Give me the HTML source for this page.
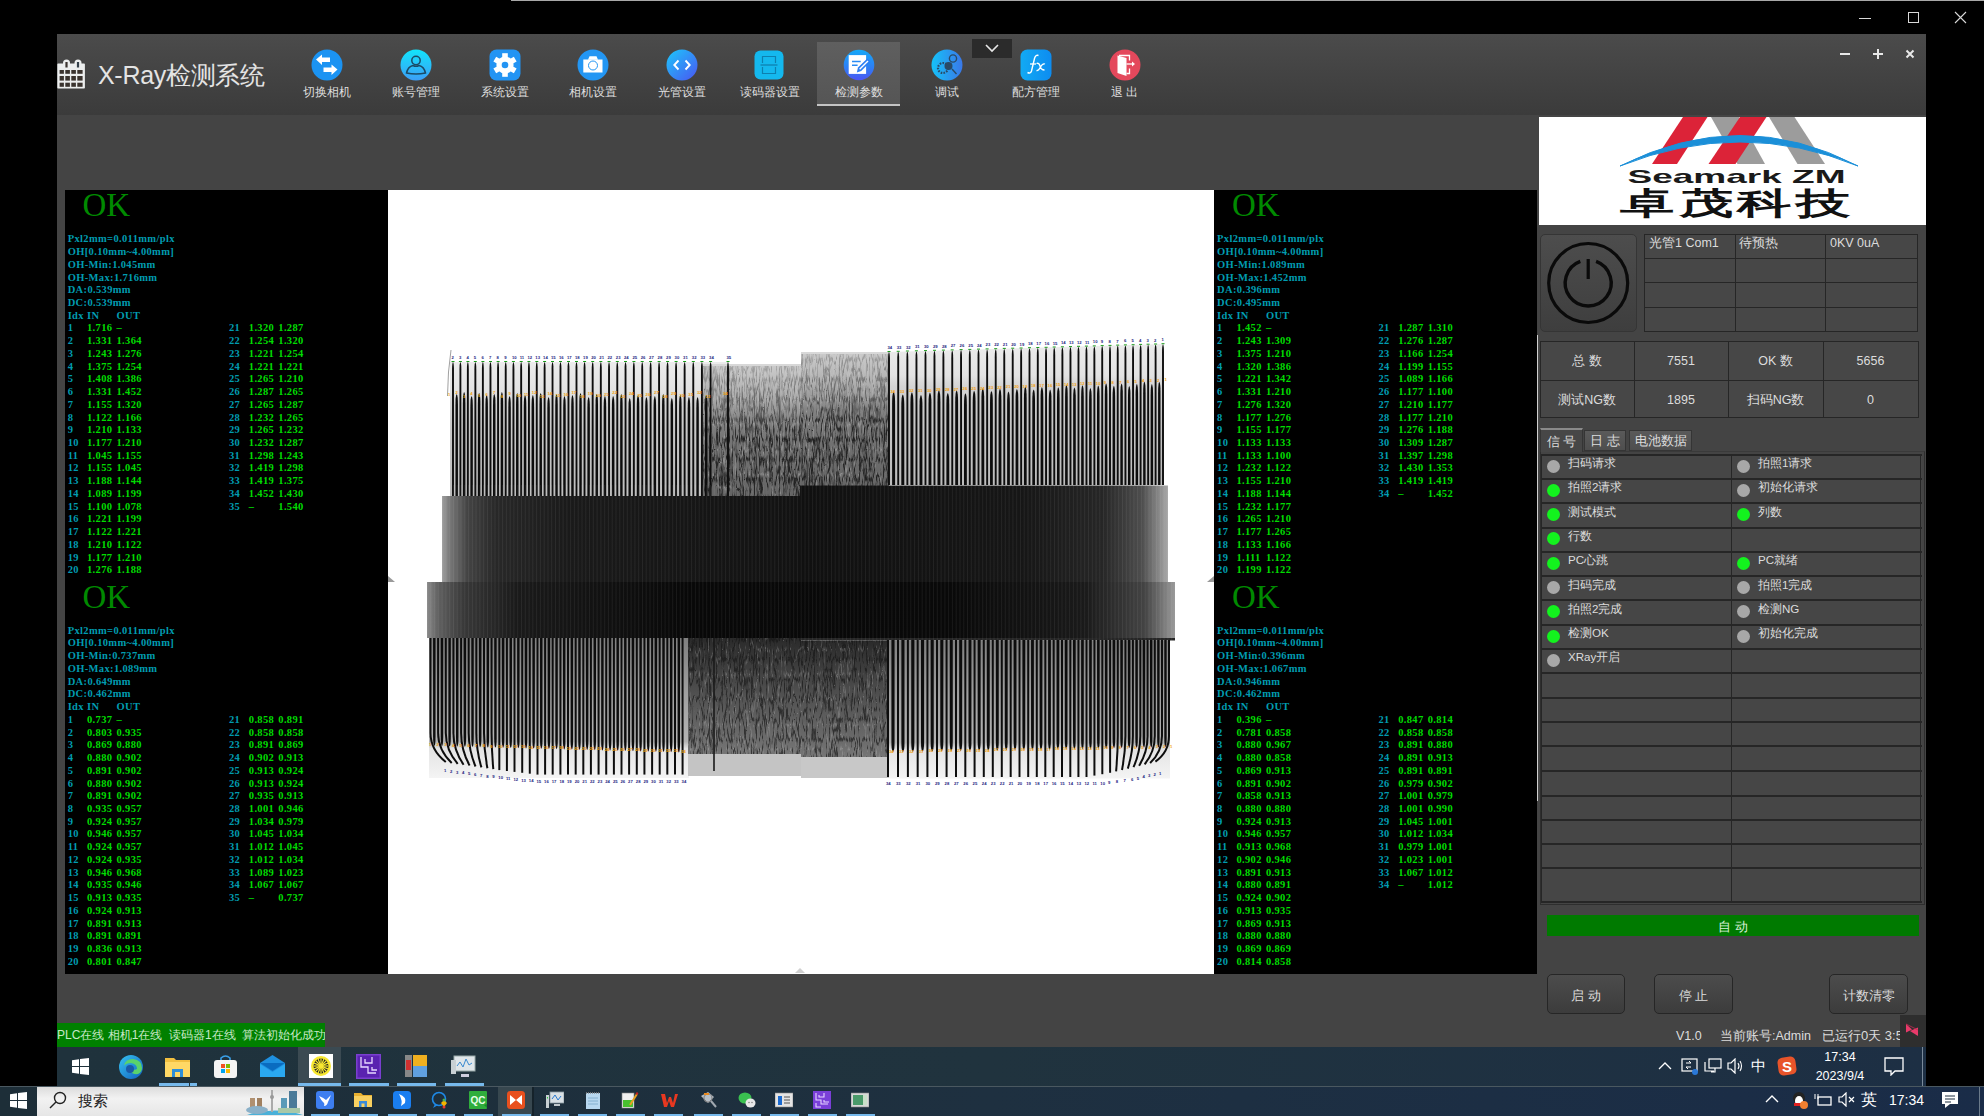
<!DOCTYPE html>
<html><head><meta charset="utf-8"><title>X-Ray</title>
<style>
*{margin:0;padding:0;box-sizing:border-box}
html,body{width:1984px;height:1116px;overflow:hidden;background:#000;font-family:"Liberation Sans",sans-serif}
.a{position:absolute}
.hd{position:absolute;left:57px;top:34px;width:1869px;height:81px;background:linear-gradient(#4b4b4b,#3b3b3b)}
.nav{position:absolute;top:0;width:84px;height:81px;text-align:center;color:#dcdcdc;font-size:12px}
.nav .ic{position:absolute;left:26px;top:15px;width:32px;height:32px}
.nav .lb{position:absolute;left:0;width:84px;top:51px;line-height:14px;white-space:nowrap}
.pn{position:absolute;background:#000;overflow:hidden}
.ok{position:absolute;font-family:"Liberation Serif",serif;color:#008a00;font-size:33px;line-height:33px}
.tx{position:absolute;font-family:"Liberation Serif",serif;font-weight:bold;font-size:10.5px;line-height:10px;white-space:nowrap;letter-spacing:0.35px}
.c{color:#009cb0}.g{color:#00dc00}
.grid td{border:1px solid #262626}
.sig{position:absolute;color:#dcdcdc;font-size:11.6px;white-space:nowrap}
.led{position:absolute;width:13px;height:13px;border-radius:50%}
.on{background:#13f21e}.off{background:#a8a8a8}
.btn{position:absolute;border:1px solid #262626;border-radius:5px;background:linear-gradient(#4c4c4c,#3c3c3c);color:#dcdcdc;font-size:13px;text-align:center}
.st{position:absolute;color:#dcdcdc;font-size:12.5px;white-space:nowrap}
</style></head><body>

<div class="a" style="left:511px;top:0;width:1473px;height:1px;background:#a8a8a8"></div>
<div class="a" style="left:1859px;top:18px;width:12px;height:1px;background:#d8d8d8"></div>
<div class="a" style="left:1908px;top:12px;width:11px;height:11px;border:1px solid #d8d8d8"></div>
<svg class="a" style="left:1954px;top:11px" width="13" height="13"><path d="M1 1L12 12M12 1L1 12" stroke="#d8d8d8" stroke-width="1.1"/></svg>
<div class="a" style="left:57px;top:34px;width:1869px;height:1013px;background:#444"></div>
<div class="hd"></div>
<svg class="a" style="left:57px;top:59px" width="29" height="30" viewBox="0 0 29 30"><rect x="0.3" y="4.6" width="27.6" height="25" rx="0.8" fill="#eceeee"/><rect x="6" y="0.6" width="7" height="8" rx="3.5" fill="#eceeee"/><rect x="8.4" y="3" width="2.2" height="5.5" fill="#3a3430"/><rect x="17.5" y="0.6" width="7" height="8" rx="3.5" fill="#eceeee"/><rect x="19.9" y="3" width="2.2" height="5.5" fill="#34404a"/><rect x="2.6" y="11.0" width="4.3" height="3.8" fill="#3a332e"/><rect x="2.6" y="17.0" width="4.3" height="4.6" fill="#3a332e"/><rect x="2.6" y="23.7" width="4.3" height="4.1" fill="#3a332e"/><rect x="8.3" y="11.0" width="4.6" height="3.8" fill="#3a332e"/><rect x="8.3" y="17.0" width="4.6" height="4.6" fill="#3a332e"/><rect x="8.3" y="23.7" width="4.6" height="4.1" fill="#3a332e"/><rect x="14.3" y="11.0" width="4.6" height="3.8" fill="#3a332e"/><rect x="14.3" y="17.0" width="4.6" height="4.6" fill="#3a332e"/><rect x="14.3" y="23.7" width="4.6" height="4.1" fill="#3a332e"/><rect x="20.3" y="11.0" width="5.3" height="3.8" fill="#3a332e"/><rect x="20.3" y="17.0" width="5.3" height="4.6" fill="#3a332e"/><rect x="20.3" y="23.7" width="5.3" height="4.1" fill="#3a332e"/></svg>
<div class="a" style="left:98px;top:58px;font-size:25px;line-height:34px;color:#e4e4e4;white-space:nowrap;letter-spacing:-0.3px">X-Ray检测系统</div>
<div class="a" style="left:817px;top:42px;width:83px;height:64px;background:linear-gradient(#5f5f5f,#555)"></div>
<div class="a" style="left:817px;top:104px;width:83px;height:2px;background:#c4c4c4"></div>
<div class="a" style="left:972px;top:39px;width:40px;height:19px;background:#2b2b2b"></div>
<svg class="a" style="left:984px;top:43px" width="16" height="10"><path d="M2 2L8 8L14 2" stroke="#e8e8e8" stroke-width="1.6" fill="none"/></svg>
<div class="a" style="left:311.3px;top:49px;width:32px;height:32px"><svg width="32" height="32" viewBox="0 0 32 32"><circle cx="16" cy="16" r="15.5" fill="#1b93f2"/><path d="M5 10.5L11 5.5V8.5H19V13H11V16Z" fill="#fff"/><path d="M26.5 20.5L20.5 15.5V18.5H12.5V23H20.5V26Z" fill="#fff"/></svg></div>
<div class="a" style="left:277.3px;top:84px;width:100px;text-align:center;font-size:12px;line-height:16px;color:#dedede;white-space:nowrap">切换相机</div>
<div class="a" style="left:399.9px;top:49px;width:32px;height:32px"><svg width="32" height="32" viewBox="0 0 32 32"><defs><linearGradient id="ga" x1="0" y1="0" x2="0" y2="1"><stop offset="0" stop-color="#12e4fb"/><stop offset="1" stop-color="#3c9ef7"/></linearGradient></defs><circle cx="16" cy="16" r="15.5" fill="url(#ga)"/><circle cx="16" cy="11.5" r="4.2" fill="none" stroke="#1b4a66" stroke-width="1.5"/><path d="M6.5 24Q8 17.5 13 16.5Q16 18 19 16.5Q24 17.5 25.5 24Q16 26 6.5 24Z" fill="none" stroke="#1b4a66" stroke-width="1.5"/></svg></div>
<div class="a" style="left:365.9px;top:84px;width:100px;text-align:center;font-size:12px;line-height:16px;color:#dedede;white-space:nowrap">账号管理</div>
<div class="a" style="left:488.5px;top:49px;width:32px;height:32px"><svg width="32" height="32" viewBox="0 0 32 32"><rect x="0.5" y="0.5" width="31" height="31" rx="7" fill="#2394f3"/><rect x="13.2" y="4.2" width="5.6" height="6" fill="#fff" transform="rotate(0 16 16)"/><rect x="13.2" y="4.2" width="5.6" height="6" fill="#fff" transform="rotate(60 16 16)"/><rect x="13.2" y="4.2" width="5.6" height="6" fill="#fff" transform="rotate(120 16 16)"/><rect x="13.2" y="4.2" width="5.6" height="6" fill="#fff" transform="rotate(180 16 16)"/><rect x="13.2" y="4.2" width="5.6" height="6" fill="#fff" transform="rotate(240 16 16)"/><rect x="13.2" y="4.2" width="5.6" height="6" fill="#fff" transform="rotate(300 16 16)"/><circle cx="16" cy="16" r="8.6" fill="#fff"/><circle cx="16" cy="16" r="3.3" fill="#2394f3"/></svg></div>
<div class="a" style="left:454.5px;top:84px;width:100px;text-align:center;font-size:12px;line-height:16px;color:#dedede;white-space:nowrap">系统设置</div>
<div class="a" style="left:577.0px;top:49px;width:32px;height:32px"><svg width="32" height="32" viewBox="0 0 32 32"><circle cx="16" cy="16" r="15.5" fill="#2396f3"/><rect x="6.3" y="10.5" width="19.2" height="13" fill="#fff"/><path d="M11 10.8L12.5 7.2H19.5L21 10.8Z" fill="#fff"/><circle cx="16" cy="16.5" r="4.5" fill="none" stroke="#2396f3" stroke-width="1"/></svg></div>
<div class="a" style="left:543.0px;top:84px;width:100px;text-align:center;font-size:12px;line-height:16px;color:#dedede;white-space:nowrap">相机设置</div>
<div class="a" style="left:665.6px;top:49px;width:32px;height:32px"><svg width="32" height="32" viewBox="0 0 32 32"><defs><linearGradient id="gt" x1="0" y1="0" x2="1" y2="1"><stop offset="0" stop-color="#1cc8fb"/><stop offset="1" stop-color="#4a55f2"/></linearGradient></defs><circle cx="16" cy="16" r="15.5" fill="url(#gt)"/><path d="M12.5 11.5L8.3 16L12.5 20.5M19.5 11.5L23.7 16L19.5 20.5" stroke="#fff" stroke-width="1.9" fill="none"/></svg></div>
<div class="a" style="left:631.6px;top:84px;width:100px;text-align:center;font-size:12px;line-height:16px;color:#dedede;white-space:nowrap">光管设置</div>
<div class="a" style="left:754.2px;top:49px;width:32px;height:32px"><svg width="32" height="32" viewBox="0 0 32 32"><rect x="0.5" y="1.5" width="29" height="29" rx="6" fill="#14b8ee"/><path d="M8.5 14V7.5H21.5V14M8.5 18V24.5H21.5V18" stroke="#0d80b0" stroke-width="1.2" fill="none"/><path d="M6.5 16H23.5" stroke="#0d80b0" stroke-width="1.3"/></svg></div>
<div class="a" style="left:720.2px;top:84px;width:100px;text-align:center;font-size:12px;line-height:16px;color:#dedede;white-space:nowrap">读码器设置</div>
<div class="a" style="left:842.8px;top:49px;width:32px;height:32px"><svg width="32" height="32" viewBox="0 0 32 32"><defs><linearGradient id="gd" x1="0" y1="0" x2="0" y2="1"><stop offset="0" stop-color="#15a8f8"/><stop offset="0.6" stop-color="#2f7df4"/><stop offset="1" stop-color="#4c55f3"/></linearGradient></defs><circle cx="16" cy="16" r="15.3" fill="url(#gd)"/><rect x="5.7" y="6.1" width="17.4" height="18.8" fill="#fff"/><path d="M9 12.6H17.7M9 16.3H14.6" stroke="#2a8cf4" stroke-width="1.5"/><path d="M13.8 23.6L15 18.6L24.3 9.6L27.4 12.8L18.2 21.9Z" fill="#2b7ef4"/><path d="M16.6 20.3L25 12" stroke="#fff" stroke-width="1.4"/></svg></div>
<div class="a" style="left:808.8px;top:84px;width:100px;text-align:center;font-size:12px;line-height:16px;color:#dedede;white-space:nowrap">检测参数</div>
<div class="a" style="left:931.4px;top:49px;width:32px;height:32px"><svg width="32" height="32" viewBox="0 0 32 32"><defs><linearGradient id="gg" x1="0" y1="0" x2="1" y2="0"><stop offset="0" stop-color="#15c2f8"/><stop offset="1" stop-color="#3a78e8"/></linearGradient></defs><circle cx="16" cy="16" r="15.5" fill="url(#gg)"/><circle cx="12" cy="19" r="5" fill="none" stroke="#2a4a66" stroke-width="2.2" stroke-dasharray="1.6 1.2"/><circle cx="17.5" cy="17" r="4" fill="#2a4a66"/><circle cx="22" cy="9.5" r="3.6" fill="none" stroke="#2a4a66" stroke-width="1.4"/><path d="M21 20L25.5 25" stroke="#2a4a66" stroke-width="1.4"/></svg></div>
<div class="a" style="left:897.4px;top:84px;width:100px;text-align:center;font-size:12px;line-height:16px;color:#dedede;white-space:nowrap">调试</div>
<div class="a" style="left:1019.9px;top:49px;width:32px;height:32px"><svg width="32" height="32" viewBox="0 0 32 32"><defs><linearGradient id="gf" x1="0" y1="0" x2="1" y2="0"><stop offset="0" stop-color="#12aaf4"/><stop offset="1" stop-color="#0d8cf0"/></linearGradient></defs><rect x="0.5" y="0.5" width="31" height="31" rx="7" fill="url(#gf)"/><path d="M18.5 6.5Q15.5 5.5 14.5 9.5L11.5 22Q10.5 25 7.5 23.5" stroke="#fff" stroke-width="1.4" fill="none"/><path d="M10 15H16" stroke="#fff" stroke-width="1.3"/><path d="M16.5 14.5Q19 13.5 20 17Q21 21 24.5 21M25 15Q22.5 14 20.5 18Q18.5 22 16.5 21.5" stroke="#fff" stroke-width="1.3" fill="none"/></svg></div>
<div class="a" style="left:985.9px;top:84px;width:100px;text-align:center;font-size:12px;line-height:16px;color:#dedede;white-space:nowrap">配方管理</div>
<div class="a" style="left:1108.5px;top:49px;width:32px;height:32px"><svg width="32" height="32" viewBox="0 0 32 32"><circle cx="16" cy="16" r="15.5" fill="#e4485c"/><path d="M8.5 6.5L17.5 9V27L8.5 24Z" fill="#fff"/><path d="M10 6.5H20.5V11.5M20.5 19.5V24.5H17.5" stroke="#fff" stroke-width="1.3" fill="none"/><path d="M17.5 15H24" stroke="#fff" stroke-width="1.3"/><path d="M23 12.5L26 15L23 17.5Z" fill="#fff"/></svg></div>
<div class="a" style="left:1074.5px;top:84px;width:100px;text-align:center;font-size:12px;line-height:16px;color:#dedede;white-space:nowrap">退 出</div>
<svg class="a" style="left:1838px;top:47px" width="80" height="14"><path d="M2 7H12" stroke="#e8e8e8" stroke-width="2"/><path d="M35 7H45M40 2V12" stroke="#e8e8e8" stroke-width="2"/><path d="M68.5 3.5L75.5 10.5M75.5 3.5L68.5 10.5" stroke="#e8e8e8" stroke-width="2"/></svg>
<div class="pn" style="left:65px;top:190px;width:323px;height:784px"></div>
<div class="a" style="left:388px;top:190px;width:826px;height:784px;background:#fff"></div>
<div class="pn" style="left:1214px;top:190px;width:323px;height:784px"></div>
<div class="ok" style="left:82.5px;top:189.3px">OK</div>
<div class="tx c" style="left:67.7px;top:234.3px">Pxl2mm=0.011mm/plx</div>
<div class="tx c" style="left:67.7px;top:247.0px">OH[0.10mm~4.00mm]</div>
<div class="tx c" style="left:67.7px;top:259.8px">OH-Min:1.045mm</div>
<div class="tx c" style="left:67.7px;top:272.5px">OH-Max:1.716mm</div>
<div class="tx c" style="left:67.7px;top:285.2px">DA:0.539mm</div>
<div class="tx c" style="left:67.7px;top:298.0px">DC:0.539mm</div>
<div class="tx c" style="left:67.7px;top:310.7px">Idx</div>
<div class="tx c" style="left:87.0px;top:310.7px">IN</div>
<div class="tx c" style="left:116.5px;top:310.7px">OUT</div>
<div class="tx c" style="left:67.7px;top:323.4px">1</div>
<div class="tx g" style="left:87.0px;top:323.4px">1.716</div>
<div class="tx g" style="left:116.5px;top:323.4px">&ndash;</div>
<div class="tx c" style="left:67.7px;top:336.1px">2</div>
<div class="tx g" style="left:87.0px;top:336.1px">1.331</div>
<div class="tx g" style="left:116.5px;top:336.1px">1.364</div>
<div class="tx c" style="left:67.7px;top:348.9px">3</div>
<div class="tx g" style="left:87.0px;top:348.9px">1.243</div>
<div class="tx g" style="left:116.5px;top:348.9px">1.276</div>
<div class="tx c" style="left:67.7px;top:361.6px">4</div>
<div class="tx g" style="left:87.0px;top:361.6px">1.375</div>
<div class="tx g" style="left:116.5px;top:361.6px">1.254</div>
<div class="tx c" style="left:67.7px;top:374.3px">5</div>
<div class="tx g" style="left:87.0px;top:374.3px">1.408</div>
<div class="tx g" style="left:116.5px;top:374.3px">1.386</div>
<div class="tx c" style="left:67.7px;top:387.1px">6</div>
<div class="tx g" style="left:87.0px;top:387.1px">1.331</div>
<div class="tx g" style="left:116.5px;top:387.1px">1.452</div>
<div class="tx c" style="left:67.7px;top:399.8px">7</div>
<div class="tx g" style="left:87.0px;top:399.8px">1.155</div>
<div class="tx g" style="left:116.5px;top:399.8px">1.320</div>
<div class="tx c" style="left:67.7px;top:412.5px">8</div>
<div class="tx g" style="left:87.0px;top:412.5px">1.122</div>
<div class="tx g" style="left:116.5px;top:412.5px">1.166</div>
<div class="tx c" style="left:67.7px;top:425.2px">9</div>
<div class="tx g" style="left:87.0px;top:425.2px">1.210</div>
<div class="tx g" style="left:116.5px;top:425.2px">1.133</div>
<div class="tx c" style="left:67.7px;top:438.0px">10</div>
<div class="tx g" style="left:87.0px;top:438.0px">1.177</div>
<div class="tx g" style="left:116.5px;top:438.0px">1.210</div>
<div class="tx c" style="left:67.7px;top:450.7px">11</div>
<div class="tx g" style="left:87.0px;top:450.7px">1.045</div>
<div class="tx g" style="left:116.5px;top:450.7px">1.155</div>
<div class="tx c" style="left:67.7px;top:463.4px">12</div>
<div class="tx g" style="left:87.0px;top:463.4px">1.155</div>
<div class="tx g" style="left:116.5px;top:463.4px">1.045</div>
<div class="tx c" style="left:67.7px;top:476.2px">13</div>
<div class="tx g" style="left:87.0px;top:476.2px">1.188</div>
<div class="tx g" style="left:116.5px;top:476.2px">1.144</div>
<div class="tx c" style="left:67.7px;top:488.9px">14</div>
<div class="tx g" style="left:87.0px;top:488.9px">1.089</div>
<div class="tx g" style="left:116.5px;top:488.9px">1.199</div>
<div class="tx c" style="left:67.7px;top:501.6px">15</div>
<div class="tx g" style="left:87.0px;top:501.6px">1.100</div>
<div class="tx g" style="left:116.5px;top:501.6px">1.078</div>
<div class="tx c" style="left:67.7px;top:514.4px">16</div>
<div class="tx g" style="left:87.0px;top:514.4px">1.221</div>
<div class="tx g" style="left:116.5px;top:514.4px">1.199</div>
<div class="tx c" style="left:67.7px;top:527.1px">17</div>
<div class="tx g" style="left:87.0px;top:527.1px">1.122</div>
<div class="tx g" style="left:116.5px;top:527.1px">1.221</div>
<div class="tx c" style="left:67.7px;top:539.8px">18</div>
<div class="tx g" style="left:87.0px;top:539.8px">1.210</div>
<div class="tx g" style="left:116.5px;top:539.8px">1.122</div>
<div class="tx c" style="left:67.7px;top:552.5px">19</div>
<div class="tx g" style="left:87.0px;top:552.5px">1.177</div>
<div class="tx g" style="left:116.5px;top:552.5px">1.210</div>
<div class="tx c" style="left:67.7px;top:565.3px">20</div>
<div class="tx g" style="left:87.0px;top:565.3px">1.276</div>
<div class="tx g" style="left:116.5px;top:565.3px">1.188</div>
<div class="tx c" style="left:229.0px;top:323.4px">21</div>
<div class="tx g" style="left:248.8px;top:323.4px">1.320</div>
<div class="tx g" style="left:278.3px;top:323.4px">1.287</div>
<div class="tx c" style="left:229.0px;top:336.1px">22</div>
<div class="tx g" style="left:248.8px;top:336.1px">1.254</div>
<div class="tx g" style="left:278.3px;top:336.1px">1.320</div>
<div class="tx c" style="left:229.0px;top:348.9px">23</div>
<div class="tx g" style="left:248.8px;top:348.9px">1.221</div>
<div class="tx g" style="left:278.3px;top:348.9px">1.254</div>
<div class="tx c" style="left:229.0px;top:361.6px">24</div>
<div class="tx g" style="left:248.8px;top:361.6px">1.221</div>
<div class="tx g" style="left:278.3px;top:361.6px">1.221</div>
<div class="tx c" style="left:229.0px;top:374.3px">25</div>
<div class="tx g" style="left:248.8px;top:374.3px">1.265</div>
<div class="tx g" style="left:278.3px;top:374.3px">1.210</div>
<div class="tx c" style="left:229.0px;top:387.1px">26</div>
<div class="tx g" style="left:248.8px;top:387.1px">1.287</div>
<div class="tx g" style="left:278.3px;top:387.1px">1.265</div>
<div class="tx c" style="left:229.0px;top:399.8px">27</div>
<div class="tx g" style="left:248.8px;top:399.8px">1.265</div>
<div class="tx g" style="left:278.3px;top:399.8px">1.287</div>
<div class="tx c" style="left:229.0px;top:412.5px">28</div>
<div class="tx g" style="left:248.8px;top:412.5px">1.232</div>
<div class="tx g" style="left:278.3px;top:412.5px">1.265</div>
<div class="tx c" style="left:229.0px;top:425.2px">29</div>
<div class="tx g" style="left:248.8px;top:425.2px">1.265</div>
<div class="tx g" style="left:278.3px;top:425.2px">1.232</div>
<div class="tx c" style="left:229.0px;top:438.0px">30</div>
<div class="tx g" style="left:248.8px;top:438.0px">1.232</div>
<div class="tx g" style="left:278.3px;top:438.0px">1.287</div>
<div class="tx c" style="left:229.0px;top:450.7px">31</div>
<div class="tx g" style="left:248.8px;top:450.7px">1.298</div>
<div class="tx g" style="left:278.3px;top:450.7px">1.243</div>
<div class="tx c" style="left:229.0px;top:463.4px">32</div>
<div class="tx g" style="left:248.8px;top:463.4px">1.419</div>
<div class="tx g" style="left:278.3px;top:463.4px">1.298</div>
<div class="tx c" style="left:229.0px;top:476.2px">33</div>
<div class="tx g" style="left:248.8px;top:476.2px">1.419</div>
<div class="tx g" style="left:278.3px;top:476.2px">1.375</div>
<div class="tx c" style="left:229.0px;top:488.9px">34</div>
<div class="tx g" style="left:248.8px;top:488.9px">1.452</div>
<div class="tx g" style="left:278.3px;top:488.9px">1.430</div>
<div class="tx c" style="left:229.0px;top:501.6px">35</div>
<div class="tx g" style="left:248.8px;top:501.6px">&ndash;</div>
<div class="tx g" style="left:278.3px;top:501.6px">1.540</div>
<div class="ok" style="left:82.5px;top:580.7px">OK</div>
<div class="tx c" style="left:67.7px;top:625.7px">Pxl2mm=0.011mm/plx</div>
<div class="tx c" style="left:67.7px;top:638.4px">OH[0.10mm~4.00mm]</div>
<div class="tx c" style="left:67.7px;top:651.2px">OH-Min:0.737mm</div>
<div class="tx c" style="left:67.7px;top:663.9px">OH-Max:1.089mm</div>
<div class="tx c" style="left:67.7px;top:676.6px">DA:0.649mm</div>
<div class="tx c" style="left:67.7px;top:689.4px">DC:0.462mm</div>
<div class="tx c" style="left:67.7px;top:702.1px">Idx</div>
<div class="tx c" style="left:87.0px;top:702.1px">IN</div>
<div class="tx c" style="left:116.5px;top:702.1px">OUT</div>
<div class="tx c" style="left:67.7px;top:714.8px">1</div>
<div class="tx g" style="left:87.0px;top:714.8px">0.737</div>
<div class="tx g" style="left:116.5px;top:714.8px">&ndash;</div>
<div class="tx c" style="left:67.7px;top:727.5px">2</div>
<div class="tx g" style="left:87.0px;top:727.5px">0.803</div>
<div class="tx g" style="left:116.5px;top:727.5px">0.935</div>
<div class="tx c" style="left:67.7px;top:740.3px">3</div>
<div class="tx g" style="left:87.0px;top:740.3px">0.869</div>
<div class="tx g" style="left:116.5px;top:740.3px">0.880</div>
<div class="tx c" style="left:67.7px;top:753.0px">4</div>
<div class="tx g" style="left:87.0px;top:753.0px">0.880</div>
<div class="tx g" style="left:116.5px;top:753.0px">0.902</div>
<div class="tx c" style="left:67.7px;top:765.7px">5</div>
<div class="tx g" style="left:87.0px;top:765.7px">0.891</div>
<div class="tx g" style="left:116.5px;top:765.7px">0.902</div>
<div class="tx c" style="left:67.7px;top:778.5px">6</div>
<div class="tx g" style="left:87.0px;top:778.5px">0.880</div>
<div class="tx g" style="left:116.5px;top:778.5px">0.902</div>
<div class="tx c" style="left:67.7px;top:791.2px">7</div>
<div class="tx g" style="left:87.0px;top:791.2px">0.891</div>
<div class="tx g" style="left:116.5px;top:791.2px">0.902</div>
<div class="tx c" style="left:67.7px;top:803.9px">8</div>
<div class="tx g" style="left:87.0px;top:803.9px">0.935</div>
<div class="tx g" style="left:116.5px;top:803.9px">0.957</div>
<div class="tx c" style="left:67.7px;top:816.7px">9</div>
<div class="tx g" style="left:87.0px;top:816.7px">0.924</div>
<div class="tx g" style="left:116.5px;top:816.7px">0.957</div>
<div class="tx c" style="left:67.7px;top:829.4px">10</div>
<div class="tx g" style="left:87.0px;top:829.4px">0.946</div>
<div class="tx g" style="left:116.5px;top:829.4px">0.957</div>
<div class="tx c" style="left:67.7px;top:842.1px">11</div>
<div class="tx g" style="left:87.0px;top:842.1px">0.924</div>
<div class="tx g" style="left:116.5px;top:842.1px">0.957</div>
<div class="tx c" style="left:67.7px;top:854.8px">12</div>
<div class="tx g" style="left:87.0px;top:854.8px">0.924</div>
<div class="tx g" style="left:116.5px;top:854.8px">0.935</div>
<div class="tx c" style="left:67.7px;top:867.6px">13</div>
<div class="tx g" style="left:87.0px;top:867.6px">0.946</div>
<div class="tx g" style="left:116.5px;top:867.6px">0.968</div>
<div class="tx c" style="left:67.7px;top:880.3px">14</div>
<div class="tx g" style="left:87.0px;top:880.3px">0.935</div>
<div class="tx g" style="left:116.5px;top:880.3px">0.946</div>
<div class="tx c" style="left:67.7px;top:893.0px">15</div>
<div class="tx g" style="left:87.0px;top:893.0px">0.913</div>
<div class="tx g" style="left:116.5px;top:893.0px">0.935</div>
<div class="tx c" style="left:67.7px;top:905.8px">16</div>
<div class="tx g" style="left:87.0px;top:905.8px">0.924</div>
<div class="tx g" style="left:116.5px;top:905.8px">0.913</div>
<div class="tx c" style="left:67.7px;top:918.5px">17</div>
<div class="tx g" style="left:87.0px;top:918.5px">0.891</div>
<div class="tx g" style="left:116.5px;top:918.5px">0.913</div>
<div class="tx c" style="left:67.7px;top:931.2px">18</div>
<div class="tx g" style="left:87.0px;top:931.2px">0.891</div>
<div class="tx g" style="left:116.5px;top:931.2px">0.891</div>
<div class="tx c" style="left:67.7px;top:944.0px">19</div>
<div class="tx g" style="left:87.0px;top:944.0px">0.836</div>
<div class="tx g" style="left:116.5px;top:944.0px">0.913</div>
<div class="tx c" style="left:67.7px;top:956.7px">20</div>
<div class="tx g" style="left:87.0px;top:956.7px">0.801</div>
<div class="tx g" style="left:116.5px;top:956.7px">0.847</div>
<div class="tx c" style="left:229.0px;top:714.8px">21</div>
<div class="tx g" style="left:248.8px;top:714.8px">0.858</div>
<div class="tx g" style="left:278.3px;top:714.8px">0.891</div>
<div class="tx c" style="left:229.0px;top:727.5px">22</div>
<div class="tx g" style="left:248.8px;top:727.5px">0.858</div>
<div class="tx g" style="left:278.3px;top:727.5px">0.858</div>
<div class="tx c" style="left:229.0px;top:740.3px">23</div>
<div class="tx g" style="left:248.8px;top:740.3px">0.891</div>
<div class="tx g" style="left:278.3px;top:740.3px">0.869</div>
<div class="tx c" style="left:229.0px;top:753.0px">24</div>
<div class="tx g" style="left:248.8px;top:753.0px">0.902</div>
<div class="tx g" style="left:278.3px;top:753.0px">0.913</div>
<div class="tx c" style="left:229.0px;top:765.7px">25</div>
<div class="tx g" style="left:248.8px;top:765.7px">0.913</div>
<div class="tx g" style="left:278.3px;top:765.7px">0.924</div>
<div class="tx c" style="left:229.0px;top:778.5px">26</div>
<div class="tx g" style="left:248.8px;top:778.5px">0.913</div>
<div class="tx g" style="left:278.3px;top:778.5px">0.924</div>
<div class="tx c" style="left:229.0px;top:791.2px">27</div>
<div class="tx g" style="left:248.8px;top:791.2px">0.935</div>
<div class="tx g" style="left:278.3px;top:791.2px">0.913</div>
<div class="tx c" style="left:229.0px;top:803.9px">28</div>
<div class="tx g" style="left:248.8px;top:803.9px">1.001</div>
<div class="tx g" style="left:278.3px;top:803.9px">0.946</div>
<div class="tx c" style="left:229.0px;top:816.7px">29</div>
<div class="tx g" style="left:248.8px;top:816.7px">1.034</div>
<div class="tx g" style="left:278.3px;top:816.7px">0.979</div>
<div class="tx c" style="left:229.0px;top:829.4px">30</div>
<div class="tx g" style="left:248.8px;top:829.4px">1.045</div>
<div class="tx g" style="left:278.3px;top:829.4px">1.034</div>
<div class="tx c" style="left:229.0px;top:842.1px">31</div>
<div class="tx g" style="left:248.8px;top:842.1px">1.012</div>
<div class="tx g" style="left:278.3px;top:842.1px">1.045</div>
<div class="tx c" style="left:229.0px;top:854.8px">32</div>
<div class="tx g" style="left:248.8px;top:854.8px">1.012</div>
<div class="tx g" style="left:278.3px;top:854.8px">1.034</div>
<div class="tx c" style="left:229.0px;top:867.6px">33</div>
<div class="tx g" style="left:248.8px;top:867.6px">1.089</div>
<div class="tx g" style="left:278.3px;top:867.6px">1.023</div>
<div class="tx c" style="left:229.0px;top:880.3px">34</div>
<div class="tx g" style="left:248.8px;top:880.3px">1.067</div>
<div class="tx g" style="left:278.3px;top:880.3px">1.067</div>
<div class="tx c" style="left:229.0px;top:893.0px">35</div>
<div class="tx g" style="left:248.8px;top:893.0px">&ndash;</div>
<div class="tx g" style="left:278.3px;top:893.0px">0.737</div>
<div class="ok" style="left:1231.9px;top:189.3px">OK</div>
<div class="tx c" style="left:1217.1px;top:234.3px">Pxl2mm=0.011mm/plx</div>
<div class="tx c" style="left:1217.1px;top:247.0px">OH[0.10mm~4.00mm]</div>
<div class="tx c" style="left:1217.1px;top:259.8px">OH-Min:1.089mm</div>
<div class="tx c" style="left:1217.1px;top:272.5px">OH-Max:1.452mm</div>
<div class="tx c" style="left:1217.1px;top:285.2px">DA:0.396mm</div>
<div class="tx c" style="left:1217.1px;top:298.0px">DC:0.495mm</div>
<div class="tx c" style="left:1217.1px;top:310.7px">Idx</div>
<div class="tx c" style="left:1236.4px;top:310.7px">IN</div>
<div class="tx c" style="left:1265.9px;top:310.7px">OUT</div>
<div class="tx c" style="left:1217.1px;top:323.4px">1</div>
<div class="tx g" style="left:1236.4px;top:323.4px">1.452</div>
<div class="tx g" style="left:1265.9px;top:323.4px">&ndash;</div>
<div class="tx c" style="left:1217.1px;top:336.1px">2</div>
<div class="tx g" style="left:1236.4px;top:336.1px">1.243</div>
<div class="tx g" style="left:1265.9px;top:336.1px">1.309</div>
<div class="tx c" style="left:1217.1px;top:348.9px">3</div>
<div class="tx g" style="left:1236.4px;top:348.9px">1.375</div>
<div class="tx g" style="left:1265.9px;top:348.9px">1.210</div>
<div class="tx c" style="left:1217.1px;top:361.6px">4</div>
<div class="tx g" style="left:1236.4px;top:361.6px">1.320</div>
<div class="tx g" style="left:1265.9px;top:361.6px">1.386</div>
<div class="tx c" style="left:1217.1px;top:374.3px">5</div>
<div class="tx g" style="left:1236.4px;top:374.3px">1.221</div>
<div class="tx g" style="left:1265.9px;top:374.3px">1.342</div>
<div class="tx c" style="left:1217.1px;top:387.1px">6</div>
<div class="tx g" style="left:1236.4px;top:387.1px">1.331</div>
<div class="tx g" style="left:1265.9px;top:387.1px">1.210</div>
<div class="tx c" style="left:1217.1px;top:399.8px">7</div>
<div class="tx g" style="left:1236.4px;top:399.8px">1.276</div>
<div class="tx g" style="left:1265.9px;top:399.8px">1.320</div>
<div class="tx c" style="left:1217.1px;top:412.5px">8</div>
<div class="tx g" style="left:1236.4px;top:412.5px">1.177</div>
<div class="tx g" style="left:1265.9px;top:412.5px">1.276</div>
<div class="tx c" style="left:1217.1px;top:425.2px">9</div>
<div class="tx g" style="left:1236.4px;top:425.2px">1.155</div>
<div class="tx g" style="left:1265.9px;top:425.2px">1.177</div>
<div class="tx c" style="left:1217.1px;top:438.0px">10</div>
<div class="tx g" style="left:1236.4px;top:438.0px">1.133</div>
<div class="tx g" style="left:1265.9px;top:438.0px">1.133</div>
<div class="tx c" style="left:1217.1px;top:450.7px">11</div>
<div class="tx g" style="left:1236.4px;top:450.7px">1.133</div>
<div class="tx g" style="left:1265.9px;top:450.7px">1.100</div>
<div class="tx c" style="left:1217.1px;top:463.4px">12</div>
<div class="tx g" style="left:1236.4px;top:463.4px">1.232</div>
<div class="tx g" style="left:1265.9px;top:463.4px">1.122</div>
<div class="tx c" style="left:1217.1px;top:476.2px">13</div>
<div class="tx g" style="left:1236.4px;top:476.2px">1.155</div>
<div class="tx g" style="left:1265.9px;top:476.2px">1.210</div>
<div class="tx c" style="left:1217.1px;top:488.9px">14</div>
<div class="tx g" style="left:1236.4px;top:488.9px">1.188</div>
<div class="tx g" style="left:1265.9px;top:488.9px">1.144</div>
<div class="tx c" style="left:1217.1px;top:501.6px">15</div>
<div class="tx g" style="left:1236.4px;top:501.6px">1.232</div>
<div class="tx g" style="left:1265.9px;top:501.6px">1.177</div>
<div class="tx c" style="left:1217.1px;top:514.4px">16</div>
<div class="tx g" style="left:1236.4px;top:514.4px">1.265</div>
<div class="tx g" style="left:1265.9px;top:514.4px">1.210</div>
<div class="tx c" style="left:1217.1px;top:527.1px">17</div>
<div class="tx g" style="left:1236.4px;top:527.1px">1.177</div>
<div class="tx g" style="left:1265.9px;top:527.1px">1.265</div>
<div class="tx c" style="left:1217.1px;top:539.8px">18</div>
<div class="tx g" style="left:1236.4px;top:539.8px">1.133</div>
<div class="tx g" style="left:1265.9px;top:539.8px">1.166</div>
<div class="tx c" style="left:1217.1px;top:552.5px">19</div>
<div class="tx g" style="left:1236.4px;top:552.5px">1.111</div>
<div class="tx g" style="left:1265.9px;top:552.5px">1.122</div>
<div class="tx c" style="left:1217.1px;top:565.3px">20</div>
<div class="tx g" style="left:1236.4px;top:565.3px">1.199</div>
<div class="tx g" style="left:1265.9px;top:565.3px">1.122</div>
<div class="tx c" style="left:1378.4px;top:323.4px">21</div>
<div class="tx g" style="left:1398.2px;top:323.4px">1.287</div>
<div class="tx g" style="left:1427.7px;top:323.4px">1.310</div>
<div class="tx c" style="left:1378.4px;top:336.1px">22</div>
<div class="tx g" style="left:1398.2px;top:336.1px">1.276</div>
<div class="tx g" style="left:1427.7px;top:336.1px">1.287</div>
<div class="tx c" style="left:1378.4px;top:348.9px">23</div>
<div class="tx g" style="left:1398.2px;top:348.9px">1.166</div>
<div class="tx g" style="left:1427.7px;top:348.9px">1.254</div>
<div class="tx c" style="left:1378.4px;top:361.6px">24</div>
<div class="tx g" style="left:1398.2px;top:361.6px">1.199</div>
<div class="tx g" style="left:1427.7px;top:361.6px">1.155</div>
<div class="tx c" style="left:1378.4px;top:374.3px">25</div>
<div class="tx g" style="left:1398.2px;top:374.3px">1.089</div>
<div class="tx g" style="left:1427.7px;top:374.3px">1.166</div>
<div class="tx c" style="left:1378.4px;top:387.1px">26</div>
<div class="tx g" style="left:1398.2px;top:387.1px">1.177</div>
<div class="tx g" style="left:1427.7px;top:387.1px">1.100</div>
<div class="tx c" style="left:1378.4px;top:399.8px">27</div>
<div class="tx g" style="left:1398.2px;top:399.8px">1.210</div>
<div class="tx g" style="left:1427.7px;top:399.8px">1.177</div>
<div class="tx c" style="left:1378.4px;top:412.5px">28</div>
<div class="tx g" style="left:1398.2px;top:412.5px">1.177</div>
<div class="tx g" style="left:1427.7px;top:412.5px">1.210</div>
<div class="tx c" style="left:1378.4px;top:425.2px">29</div>
<div class="tx g" style="left:1398.2px;top:425.2px">1.276</div>
<div class="tx g" style="left:1427.7px;top:425.2px">1.188</div>
<div class="tx c" style="left:1378.4px;top:438.0px">30</div>
<div class="tx g" style="left:1398.2px;top:438.0px">1.309</div>
<div class="tx g" style="left:1427.7px;top:438.0px">1.287</div>
<div class="tx c" style="left:1378.4px;top:450.7px">31</div>
<div class="tx g" style="left:1398.2px;top:450.7px">1.397</div>
<div class="tx g" style="left:1427.7px;top:450.7px">1.298</div>
<div class="tx c" style="left:1378.4px;top:463.4px">32</div>
<div class="tx g" style="left:1398.2px;top:463.4px">1.430</div>
<div class="tx g" style="left:1427.7px;top:463.4px">1.353</div>
<div class="tx c" style="left:1378.4px;top:476.2px">33</div>
<div class="tx g" style="left:1398.2px;top:476.2px">1.419</div>
<div class="tx g" style="left:1427.7px;top:476.2px">1.419</div>
<div class="tx c" style="left:1378.4px;top:488.9px">34</div>
<div class="tx g" style="left:1398.2px;top:488.9px">&ndash;</div>
<div class="tx g" style="left:1427.7px;top:488.9px">1.452</div>
<div class="ok" style="left:1231.9px;top:580.7px">OK</div>
<div class="tx c" style="left:1217.1px;top:625.7px">Pxl2mm=0.011mm/plx</div>
<div class="tx c" style="left:1217.1px;top:638.4px">OH[0.10mm~4.00mm]</div>
<div class="tx c" style="left:1217.1px;top:651.2px">OH-Min:0.396mm</div>
<div class="tx c" style="left:1217.1px;top:663.9px">OH-Max:1.067mm</div>
<div class="tx c" style="left:1217.1px;top:676.6px">DA:0.946mm</div>
<div class="tx c" style="left:1217.1px;top:689.4px">DC:0.462mm</div>
<div class="tx c" style="left:1217.1px;top:702.1px">Idx</div>
<div class="tx c" style="left:1236.4px;top:702.1px">IN</div>
<div class="tx c" style="left:1265.9px;top:702.1px">OUT</div>
<div class="tx c" style="left:1217.1px;top:714.8px">1</div>
<div class="tx g" style="left:1236.4px;top:714.8px">0.396</div>
<div class="tx g" style="left:1265.9px;top:714.8px">&ndash;</div>
<div class="tx c" style="left:1217.1px;top:727.5px">2</div>
<div class="tx g" style="left:1236.4px;top:727.5px">0.781</div>
<div class="tx g" style="left:1265.9px;top:727.5px">0.858</div>
<div class="tx c" style="left:1217.1px;top:740.3px">3</div>
<div class="tx g" style="left:1236.4px;top:740.3px">0.880</div>
<div class="tx g" style="left:1265.9px;top:740.3px">0.967</div>
<div class="tx c" style="left:1217.1px;top:753.0px">4</div>
<div class="tx g" style="left:1236.4px;top:753.0px">0.880</div>
<div class="tx g" style="left:1265.9px;top:753.0px">0.858</div>
<div class="tx c" style="left:1217.1px;top:765.7px">5</div>
<div class="tx g" style="left:1236.4px;top:765.7px">0.869</div>
<div class="tx g" style="left:1265.9px;top:765.7px">0.913</div>
<div class="tx c" style="left:1217.1px;top:778.5px">6</div>
<div class="tx g" style="left:1236.4px;top:778.5px">0.891</div>
<div class="tx g" style="left:1265.9px;top:778.5px">0.902</div>
<div class="tx c" style="left:1217.1px;top:791.2px">7</div>
<div class="tx g" style="left:1236.4px;top:791.2px">0.858</div>
<div class="tx g" style="left:1265.9px;top:791.2px">0.913</div>
<div class="tx c" style="left:1217.1px;top:803.9px">8</div>
<div class="tx g" style="left:1236.4px;top:803.9px">0.880</div>
<div class="tx g" style="left:1265.9px;top:803.9px">0.880</div>
<div class="tx c" style="left:1217.1px;top:816.7px">9</div>
<div class="tx g" style="left:1236.4px;top:816.7px">0.924</div>
<div class="tx g" style="left:1265.9px;top:816.7px">0.913</div>
<div class="tx c" style="left:1217.1px;top:829.4px">10</div>
<div class="tx g" style="left:1236.4px;top:829.4px">0.946</div>
<div class="tx g" style="left:1265.9px;top:829.4px">0.957</div>
<div class="tx c" style="left:1217.1px;top:842.1px">11</div>
<div class="tx g" style="left:1236.4px;top:842.1px">0.913</div>
<div class="tx g" style="left:1265.9px;top:842.1px">0.968</div>
<div class="tx c" style="left:1217.1px;top:854.8px">12</div>
<div class="tx g" style="left:1236.4px;top:854.8px">0.902</div>
<div class="tx g" style="left:1265.9px;top:854.8px">0.946</div>
<div class="tx c" style="left:1217.1px;top:867.6px">13</div>
<div class="tx g" style="left:1236.4px;top:867.6px">0.891</div>
<div class="tx g" style="left:1265.9px;top:867.6px">0.913</div>
<div class="tx c" style="left:1217.1px;top:880.3px">14</div>
<div class="tx g" style="left:1236.4px;top:880.3px">0.880</div>
<div class="tx g" style="left:1265.9px;top:880.3px">0.891</div>
<div class="tx c" style="left:1217.1px;top:893.0px">15</div>
<div class="tx g" style="left:1236.4px;top:893.0px">0.924</div>
<div class="tx g" style="left:1265.9px;top:893.0px">0.902</div>
<div class="tx c" style="left:1217.1px;top:905.8px">16</div>
<div class="tx g" style="left:1236.4px;top:905.8px">0.913</div>
<div class="tx g" style="left:1265.9px;top:905.8px">0.935</div>
<div class="tx c" style="left:1217.1px;top:918.5px">17</div>
<div class="tx g" style="left:1236.4px;top:918.5px">0.869</div>
<div class="tx g" style="left:1265.9px;top:918.5px">0.913</div>
<div class="tx c" style="left:1217.1px;top:931.2px">18</div>
<div class="tx g" style="left:1236.4px;top:931.2px">0.880</div>
<div class="tx g" style="left:1265.9px;top:931.2px">0.880</div>
<div class="tx c" style="left:1217.1px;top:944.0px">19</div>
<div class="tx g" style="left:1236.4px;top:944.0px">0.869</div>
<div class="tx g" style="left:1265.9px;top:944.0px">0.869</div>
<div class="tx c" style="left:1217.1px;top:956.7px">20</div>
<div class="tx g" style="left:1236.4px;top:956.7px">0.814</div>
<div class="tx g" style="left:1265.9px;top:956.7px">0.858</div>
<div class="tx c" style="left:1378.4px;top:714.8px">21</div>
<div class="tx g" style="left:1398.2px;top:714.8px">0.847</div>
<div class="tx g" style="left:1427.7px;top:714.8px">0.814</div>
<div class="tx c" style="left:1378.4px;top:727.5px">22</div>
<div class="tx g" style="left:1398.2px;top:727.5px">0.858</div>
<div class="tx g" style="left:1427.7px;top:727.5px">0.858</div>
<div class="tx c" style="left:1378.4px;top:740.3px">23</div>
<div class="tx g" style="left:1398.2px;top:740.3px">0.891</div>
<div class="tx g" style="left:1427.7px;top:740.3px">0.880</div>
<div class="tx c" style="left:1378.4px;top:753.0px">24</div>
<div class="tx g" style="left:1398.2px;top:753.0px">0.891</div>
<div class="tx g" style="left:1427.7px;top:753.0px">0.913</div>
<div class="tx c" style="left:1378.4px;top:765.7px">25</div>
<div class="tx g" style="left:1398.2px;top:765.7px">0.891</div>
<div class="tx g" style="left:1427.7px;top:765.7px">0.891</div>
<div class="tx c" style="left:1378.4px;top:778.5px">26</div>
<div class="tx g" style="left:1398.2px;top:778.5px">0.979</div>
<div class="tx g" style="left:1427.7px;top:778.5px">0.902</div>
<div class="tx c" style="left:1378.4px;top:791.2px">27</div>
<div class="tx g" style="left:1398.2px;top:791.2px">1.001</div>
<div class="tx g" style="left:1427.7px;top:791.2px">0.979</div>
<div class="tx c" style="left:1378.4px;top:803.9px">28</div>
<div class="tx g" style="left:1398.2px;top:803.9px">1.001</div>
<div class="tx g" style="left:1427.7px;top:803.9px">0.990</div>
<div class="tx c" style="left:1378.4px;top:816.7px">29</div>
<div class="tx g" style="left:1398.2px;top:816.7px">1.045</div>
<div class="tx g" style="left:1427.7px;top:816.7px">1.001</div>
<div class="tx c" style="left:1378.4px;top:829.4px">30</div>
<div class="tx g" style="left:1398.2px;top:829.4px">1.012</div>
<div class="tx g" style="left:1427.7px;top:829.4px">1.034</div>
<div class="tx c" style="left:1378.4px;top:842.1px">31</div>
<div class="tx g" style="left:1398.2px;top:842.1px">0.979</div>
<div class="tx g" style="left:1427.7px;top:842.1px">1.001</div>
<div class="tx c" style="left:1378.4px;top:854.8px">32</div>
<div class="tx g" style="left:1398.2px;top:854.8px">1.023</div>
<div class="tx g" style="left:1427.7px;top:854.8px">1.001</div>
<div class="tx c" style="left:1378.4px;top:867.6px">33</div>
<div class="tx g" style="left:1398.2px;top:867.6px">1.067</div>
<div class="tx g" style="left:1427.7px;top:867.6px">1.012</div>
<div class="tx c" style="left:1378.4px;top:880.3px">34</div>
<div class="tx g" style="left:1398.2px;top:880.3px">&ndash;</div>
<div class="tx g" style="left:1427.7px;top:880.3px">1.012</div>
<svg class="a" style="left:388px;top:190px" width="826" height="784" viewBox="388 190 826 784"><defs>
<filter id="tx" x="0" y="0" width="100%" height="100%">
<feTurbulence type="turbulence" baseFrequency="0.3 0.05" numOctaves="2" seed="4" result="n"/>
<feColorMatrix in="n" type="matrix" values="0 0 0 0 0  0 0 0 0 0  0 0 0 0 0  -5.5 0 0 0 1.3" result="m"/>
<feComposite in="SourceGraphic" in2="m" operator="in"/>
</filter>
<filter id="tx2" x="0" y="0" width="100%" height="100%">
<feTurbulence type="turbulence" baseFrequency="0.3 0.05" numOctaves="2" seed="11" result="n"/>
<feColorMatrix in="n" type="matrix" values="0 0 0 0 0  0 0 0 0 0  0 0 0 0 0  -5.5 0 0 0 1.3" result="m"/>
<feComposite in="SourceGraphic" in2="m" operator="in"/>
</filter>
<filter id="txh" x="0" y="0" width="100%" height="100%">
<feTurbulence type="turbulence" baseFrequency="0.22 0.04" numOctaves="2" seed="23" result="n"/>
<feColorMatrix in="n" type="matrix" values="0 0 0 0 0  0 0 0 0 0  0 0 0 0 0  -6 0 0 0 0.9" result="m"/>
<feComposite in="SourceGraphic" in2="m" operator="in"/>
</filter>
<filter id="bl" x="-10%" y="-10%" width="120%" height="120%" filterUnits="objectBoundingBox"><feGaussianBlur stdDeviation="0.6"/></filter>
<linearGradient id="texg" x1="0" y1="0" x2="0" y2="1"><stop offset="0" stop-color="#c0c0c0"/><stop offset="0.22" stop-color="#a6a6a6"/><stop offset="0.42" stop-color="#7c7c7c"/><stop offset="1" stop-color="#646464"/></linearGradient>
<linearGradient id="texov" x1="0" y1="0" x2="0" y2="1"><stop offset="0" stop-color="#d0d0d0" stop-opacity="0.75"/><stop offset="0.35" stop-color="#b0b0b0" stop-opacity="0.35"/><stop offset="0.55" stop-color="#909090" stop-opacity="0"/></linearGradient>
<linearGradient id="texl" x1="0" y1="0" x2="0" y2="1"><stop offset="0" stop-color="#2a2a2a"/><stop offset="0.45" stop-color="#4e4e4e"/><stop offset="1" stop-color="#767676"/></linearGradient>
<linearGradient id="bandUL" x1="0" y1="0" x2="1" y2="0"><stop offset="0" stop-color="#a0a0a0"/><stop offset="0.02" stop-color="#7a7a7a"/><stop offset="0.07" stop-color="#444"/><stop offset="0.15" stop-color="#282828"/><stop offset="0.35" stop-color="#1a1a1a"/><stop offset="1" stop-color="#121212"/></linearGradient>
<linearGradient id="bandUR" x1="0" y1="0" x2="1" y2="0"><stop offset="0" stop-color="#101010"/><stop offset="0.6" stop-color="#161616"/><stop offset="0.82" stop-color="#262626"/><stop offset="0.93" stop-color="#4e4e4e"/><stop offset="1" stop-color="#a8a8a8"/></linearGradient>
<linearGradient id="bandM" x1="0" y1="0" x2="1" y2="0"><stop offset="0" stop-color="#8a8a8a"/><stop offset="0.015" stop-color="#606060"/><stop offset="0.05" stop-color="#383838"/><stop offset="0.12" stop-color="#1a1a1a"/><stop offset="0.35" stop-color="#080808"/><stop offset="0.7" stop-color="#090909"/><stop offset="0.88" stop-color="#1a1a1a"/><stop offset="0.96" stop-color="#444"/><stop offset="1" stop-color="#9a9a9a"/></linearGradient>
<linearGradient id="combU" x1="0" y1="0" x2="0" y2="1"><stop offset="0" stop-color="#ececec"/><stop offset="0.22" stop-color="#e2e2e2"/><stop offset="0.3" stop-color="#d4d4d4"/><stop offset="0.5" stop-color="#c8c8c8"/><stop offset="1" stop-color="#bcbcbc"/></linearGradient>
<linearGradient id="combL" x1="0" y1="0" x2="0" y2="1"><stop offset="0" stop-color="#808080"/><stop offset="0.4" stop-color="#a0a0a0"/><stop offset="0.74" stop-color="#b4b4b4"/><stop offset="0.79" stop-color="#e4e4e4"/><stop offset="1" stop-color="#f4f4f4"/></linearGradient>
</defs><rect x="450" y="362" width="278" height="134" fill="url(#combU)"/><polygon points="889,352 1164,344 1164,485 889,485" fill="url(#combU)"/><rect x="702" y="364" width="99" height="132" fill="url(#texg)"/><rect x="702" y="364" width="99" height="132" fill="#1a1a1a" filter="url(#tx)" opacity="0.85"/><rect x="702" y="364" width="99" height="132" fill="#e0e0e0" filter="url(#txh)" opacity="0.35"/><rect x="801" y="352" width="88" height="134" fill="url(#texg)"/><rect x="801" y="352" width="88" height="134" fill="#1a1a1a" filter="url(#tx2)" opacity="0.85"/><rect x="801" y="352" width="88" height="134" fill="#e0e0e0" filter="url(#txh)" opacity="0.35"/><rect x="702" y="364" width="99" height="132" fill="#1a1a1a" filter="url(#tx2)" opacity="0.45"/><rect x="801" y="352" width="88" height="134" fill="#1a1a1a" filter="url(#tx)" opacity="0.45"/><rect x="702" y="364" width="99" height="132" fill="url(#texov)"/><rect x="801" y="352" width="88" height="134" fill="url(#texov)"/><rect x="702" y="364" width="99" height="2" fill="#d8d8d8"/><rect x="801" y="352" width="88" height="2" fill="#d8d8d8"/><g filter="url(#bl)"><path d="M453.00 362.0 Q453.95 363.0 453.95 370.0 V496.0 H452.05 V370.0 Q452.05 363.0 453.00 362.0 Z" fill="#111"/><path d="M456.70 394.0 Q457.95 395.0 457.95 406.0 V496.0 H455.45 V406.0 Q455.45 395.0 456.70 394.0 Z" fill="#111"/><path d="M460.41 362.0 Q461.36 363.0 461.36 370.0 V496.0 H459.46 V370.0 Q459.46 363.0 460.41 362.0 Z" fill="#111"/><path d="M464.13 392.0 Q465.38 393.0 465.38 404.0 V496.0 H462.88 V404.0 Q462.88 393.0 464.13 392.0 Z" fill="#111"/><path d="M467.86 362.0 Q468.81 363.0 468.81 370.0 V496.0 H466.91 V370.0 Q466.91 363.0 467.86 362.0 Z" fill="#111"/><path d="M471.60 396.0 Q472.85 397.0 472.85 408.0 V496.0 H470.35 V408.0 Q470.35 397.0 471.60 396.0 Z" fill="#111"/><path d="M475.35 362.0 Q476.30 363.0 476.30 370.0 V496.0 H474.40 V370.0 Q474.40 363.0 475.35 362.0 Z" fill="#111"/><path d="M479.11 393.0 Q480.36 394.0 480.36 405.0 V496.0 H477.86 V405.0 Q477.86 394.0 479.11 393.0 Z" fill="#111"/><path d="M482.88 362.0 Q483.83 363.0 483.83 370.0 V496.0 H481.93 V370.0 Q481.93 363.0 482.88 362.0 Z" fill="#111"/><path d="M486.67 395.0 Q487.92 396.0 487.92 407.0 V496.0 H485.42 V407.0 Q485.42 396.0 486.67 395.0 Z" fill="#111"/><path d="M490.45 362.0 Q491.40 363.0 491.40 370.0 V496.0 H489.50 V370.0 Q489.50 363.0 490.45 362.0 Z" fill="#111"/><path d="M494.26 394.0 Q495.51 395.0 495.51 406.0 V496.0 H493.01 V406.0 Q493.01 395.0 494.26 394.0 Z" fill="#111"/><path d="M498.07 362.0 Q499.02 363.0 499.02 370.0 V496.0 H497.12 V370.0 Q497.12 363.0 498.07 362.0 Z" fill="#111"/><path d="M501.90 392.0 Q503.15 393.0 503.15 404.0 V496.0 H500.65 V404.0 Q500.65 393.0 501.90 392.0 Z" fill="#111"/><path d="M505.73 362.0 Q506.68 363.0 506.68 370.0 V496.0 H504.78 V370.0 Q504.78 363.0 505.73 362.0 Z" fill="#111"/><path d="M509.57 396.0 Q510.82 397.0 510.82 408.0 V496.0 H508.32 V408.0 Q508.32 397.0 509.57 396.0 Z" fill="#111"/><path d="M513.42 362.0 Q514.37 363.0 514.37 370.0 V496.0 H512.47 V370.0 Q512.47 363.0 513.42 362.0 Z" fill="#111"/><path d="M517.29 393.0 Q518.54 394.0 518.54 405.0 V496.0 H516.04 V405.0 Q516.04 394.0 517.29 393.0 Z" fill="#111"/><path d="M521.16 362.0 Q522.11 363.0 522.11 370.0 V496.0 H520.21 V370.0 Q520.21 363.0 521.16 362.0 Z" fill="#111"/><path d="M525.05 395.0 Q526.30 396.0 526.30 407.0 V496.0 H523.80 V407.0 Q523.80 396.0 525.05 395.0 Z" fill="#111"/><path d="M528.94 362.0 Q529.89 363.0 529.89 370.0 V496.0 H527.99 V370.0 Q527.99 363.0 528.94 362.0 Z" fill="#111"/><path d="M532.85 395.0 Q534.10 396.0 534.10 407.0 V496.0 H531.60 V407.0 Q531.60 396.0 532.85 395.0 Z" fill="#111"/><path d="M536.77 362.0 Q537.72 363.0 537.72 370.0 V496.0 H535.82 V370.0 Q535.82 363.0 536.77 362.0 Z" fill="#111"/><path d="M540.70 393.0 Q541.95 394.0 541.95 405.0 V496.0 H539.45 V405.0 Q539.45 394.0 540.70 393.0 Z" fill="#111"/><path d="M544.63 362.0 Q545.58 363.0 545.58 370.0 V496.0 H543.68 V370.0 Q543.68 363.0 544.63 362.0 Z" fill="#111"/><path d="M548.58 397.0 Q549.83 398.0 549.83 409.0 V496.0 H547.33 V409.0 Q547.33 398.0 548.58 397.0 Z" fill="#111"/><path d="M552.53 362.0 Q553.48 363.0 553.48 370.0 V496.0 H551.58 V370.0 Q551.58 363.0 552.53 362.0 Z" fill="#111"/><path d="M556.51 394.0 Q557.76 395.0 557.76 406.0 V496.0 H555.26 V406.0 Q555.26 395.0 556.51 394.0 Z" fill="#111"/><path d="M560.48 362.0 Q561.43 363.0 561.43 370.0 V496.0 H559.53 V370.0 Q559.53 363.0 560.48 362.0 Z" fill="#111"/><path d="M564.47 396.0 Q565.72 397.0 565.72 408.0 V496.0 H563.22 V408.0 Q563.22 397.0 564.47 396.0 Z" fill="#111"/><path d="M568.47 362.0 Q569.42 363.0 569.42 370.0 V496.0 H567.52 V370.0 Q567.52 363.0 568.47 362.0 Z" fill="#111"/><path d="M572.48 395.0 Q573.73 396.0 573.73 407.0 V496.0 H571.23 V407.0 Q571.23 396.0 572.48 395.0 Z" fill="#111"/><path d="M576.50 362.0 Q577.45 363.0 577.45 370.0 V496.0 H575.55 V370.0 Q575.55 363.0 576.50 362.0 Z" fill="#111"/><path d="M580.53 393.0 Q581.78 394.0 581.78 405.0 V496.0 H579.28 V405.0 Q579.28 394.0 580.53 393.0 Z" fill="#111"/><path d="M584.57 362.0 Q585.52 363.0 585.52 370.0 V496.0 H583.62 V370.0 Q583.62 363.0 584.57 362.0 Z" fill="#111"/><path d="M588.62 397.0 Q589.87 398.0 589.87 409.0 V496.0 H587.37 V409.0 Q587.37 398.0 588.62 397.0 Z" fill="#111"/><path d="M592.68 362.0 Q593.63 363.0 593.63 370.0 V496.0 H591.73 V370.0 Q591.73 363.0 592.68 362.0 Z" fill="#111"/><path d="M596.76 394.0 Q598.01 395.0 598.01 406.0 V496.0 H595.51 V406.0 Q595.51 395.0 596.76 394.0 Z" fill="#111"/><path d="M600.83 362.0 Q601.78 363.0 601.78 370.0 V496.0 H599.88 V370.0 Q599.88 363.0 600.83 362.0 Z" fill="#111"/><path d="M604.93 396.0 Q606.18 397.0 606.18 408.0 V496.0 H603.68 V408.0 Q603.68 397.0 604.93 396.0 Z" fill="#111"/><path d="M609.03 362.0 Q609.98 363.0 609.98 370.0 V496.0 H608.08 V370.0 Q608.08 363.0 609.03 362.0 Z" fill="#111"/><path d="M613.15 396.0 Q614.40 397.0 614.40 408.0 V496.0 H611.90 V408.0 Q611.90 397.0 613.15 396.0 Z" fill="#111"/><path d="M617.27 362.0 Q618.22 363.0 618.22 370.0 V496.0 H616.32 V370.0 Q616.32 363.0 617.27 362.0 Z" fill="#111"/><path d="M621.40 394.0 Q622.65 395.0 622.65 406.0 V496.0 H620.15 V406.0 Q620.15 395.0 621.40 394.0 Z" fill="#111"/><path d="M625.54 362.0 Q626.49 363.0 626.49 370.0 V496.0 H624.59 V370.0 Q624.59 363.0 625.54 362.0 Z" fill="#111"/><path d="M629.70 398.0 Q630.95 399.0 630.95 410.0 V496.0 H628.45 V410.0 Q628.45 399.0 629.70 398.0 Z" fill="#111"/><path d="M633.86 362.0 Q634.81 363.0 634.81 370.0 V496.0 H632.91 V370.0 Q632.91 363.0 633.86 362.0 Z" fill="#111"/><path d="M638.04 395.0 Q639.29 396.0 639.29 407.0 V496.0 H636.79 V407.0 Q636.79 396.0 638.04 395.0 Z" fill="#111"/><path d="M642.22 362.0 Q643.17 363.0 643.17 370.0 V496.0 H641.27 V370.0 Q641.27 363.0 642.22 362.0 Z" fill="#111"/><path d="M646.42 397.0 Q647.67 398.0 647.67 409.0 V496.0 H645.17 V409.0 Q645.17 398.0 646.42 397.0 Z" fill="#111"/><path d="M650.63 362.0 Q651.58 363.0 651.58 370.0 V496.0 H649.68 V370.0 Q649.68 363.0 650.63 362.0 Z" fill="#111"/><path d="M654.85 396.0 Q656.10 397.0 656.10 408.0 V496.0 H653.60 V408.0 Q653.60 397.0 654.85 396.0 Z" fill="#111"/><path d="M659.07 362.0 Q660.02 363.0 660.02 370.0 V496.0 H658.12 V370.0 Q658.12 363.0 659.07 362.0 Z" fill="#111"/><path d="M663.31 394.0 Q664.56 395.0 664.56 406.0 V496.0 H662.06 V406.0 Q662.06 395.0 663.31 394.0 Z" fill="#111"/><path d="M667.55 362.0 Q668.50 363.0 668.50 370.0 V496.0 H666.60 V370.0 Q666.60 363.0 667.55 362.0 Z" fill="#111"/><path d="M671.82 398.0 Q673.07 399.0 673.07 410.0 V496.0 H670.57 V410.0 Q670.57 399.0 671.82 398.0 Z" fill="#111"/><path d="M676.08 362.0 Q677.03 363.0 677.03 370.0 V496.0 H675.13 V370.0 Q675.13 363.0 676.08 362.0 Z" fill="#111"/><path d="M680.36 395.0 Q681.61 396.0 681.61 407.0 V496.0 H679.11 V407.0 Q679.11 396.0 680.36 395.0 Z" fill="#111"/><path d="M684.65 362.0 Q685.60 363.0 685.60 370.0 V496.0 H683.70 V370.0 Q683.70 363.0 684.65 362.0 Z" fill="#111"/><path d="M688.95 397.0 Q690.20 398.0 690.20 409.0 V496.0 H687.70 V409.0 Q687.70 398.0 688.95 397.0 Z" fill="#111"/><path d="M693.26 362.0 Q694.21 363.0 694.21 370.0 V496.0 H692.31 V370.0 Q692.31 363.0 693.26 362.0 Z" fill="#111"/><path d="M697.58 397.0 Q698.83 398.0 698.83 409.0 V496.0 H696.33 V409.0 Q696.33 398.0 697.58 397.0 Z" fill="#111"/><path d="M701.91 362.0 Q702.86 363.0 702.86 370.0 V496.0 H700.96 V370.0 Q700.96 363.0 701.91 362.0 Z" fill="#111"/><path d="M706.25 395.0 Q707.50 396.0 707.50 407.0 V496.0 H705.00 V407.0 Q705.00 396.0 706.25 395.0 Z" fill="#111"/><path d="M710.60 362.0 Q711.55 363.0 711.55 370.0 V496.0 H709.65 V370.0 Q709.65 363.0 710.60 362.0 Z" fill="#111"/><path d="M728.00 362.0 Q728.95 363.0 728.95 370.0 V496.0 H727.05 V370.0 Q727.05 363.0 728.00 362.0 Z" fill="#111"/><path d="M447.5 396 L448.5 372 L451 350" stroke="#888" stroke-width="0.8" fill="none"/><path d="M889.00 352.0 Q889.95 353.0 889.95 360.0 V485.0 H888.05 V360.0 Q888.05 353.0 889.00 352.0 Z" fill="#111"/><path d="M893.60 392.0 Q895.10 393.0 895.10 404.0 V485.0 H892.10 V404.0 Q892.10 393.0 893.60 392.0 Z" fill="#111"/><path d="M898.20 351.8 Q899.15 352.8 899.15 359.8 V485.0 H897.25 V359.8 Q897.25 352.8 898.20 351.8 Z" fill="#111"/><path d="M902.78 394.6 Q904.27 395.6 904.27 406.6 V485.0 H901.29 V406.6 Q901.29 395.6 902.78 394.6 Z" fill="#111"/><path d="M907.35 351.5 Q908.30 352.5 908.30 359.5 V485.0 H906.40 V359.5 Q906.40 352.5 907.35 351.5 Z" fill="#111"/><path d="M911.90 392.3 Q913.38 393.3 913.38 404.3 V485.0 H910.41 V404.3 Q910.41 393.3 911.90 392.3 Z" fill="#111"/><path d="M916.44 351.3 Q917.39 352.3 917.39 359.3 V485.0 H915.49 V359.3 Q915.49 352.3 916.44 351.3 Z" fill="#111"/><path d="M920.96 394.9 Q922.43 395.9 922.43 406.9 V485.0 H919.49 V406.9 Q919.49 395.9 920.96 394.9 Z" fill="#111"/><path d="M925.48 351.1 Q926.43 352.1 926.43 359.1 V485.0 H924.53 V359.1 Q924.53 352.1 925.48 351.1 Z" fill="#111"/><path d="M929.96 392.6 Q931.43 393.6 931.43 404.6 V485.0 H928.50 V404.6 Q928.50 393.6 929.96 392.6 Z" fill="#111"/><path d="M934.45 350.8 Q935.40 351.8 935.40 358.8 V485.0 H933.50 V358.8 Q933.50 351.8 934.45 350.8 Z" fill="#111"/><path d="M938.92 390.2 Q940.37 391.2 940.37 402.2 V485.0 H937.46 V402.2 Q937.46 391.2 938.92 390.2 Z" fill="#111"/><path d="M943.38 350.6 Q944.33 351.6 944.33 358.6 V485.0 H942.43 V358.6 Q942.43 351.6 943.38 350.6 Z" fill="#111"/><path d="M947.81 392.9 Q949.26 393.9 949.26 404.9 V485.0 H946.36 V404.9 Q946.36 393.9 947.81 392.9 Z" fill="#111"/><path d="M952.24 350.4 Q953.19 351.4 953.19 358.4 V485.0 H951.29 V358.4 Q951.29 351.4 952.24 350.4 Z" fill="#111"/><path d="M956.65 390.5 Q958.08 391.5 958.08 402.5 V485.0 H955.21 V402.5 Q955.21 391.5 956.65 390.5 Z" fill="#111"/><path d="M961.05 350.1 Q962.00 351.1 962.00 358.1 V485.0 H960.10 V358.1 Q960.10 351.1 961.05 350.1 Z" fill="#111"/><path d="M965.43 393.2 Q966.86 394.2 966.86 405.2 V485.0 H964.00 V405.2 Q964.00 394.2 965.43 393.2 Z" fill="#111"/><path d="M969.80 349.9 Q970.75 350.9 970.75 357.9 V485.0 H968.85 V357.9 Q968.85 350.9 969.80 349.9 Z" fill="#111"/><path d="M974.15 390.8 Q975.57 391.8 975.57 402.8 V485.0 H972.73 V402.8 Q972.73 391.8 974.15 390.8 Z" fill="#111"/><path d="M978.50 349.6 Q979.45 350.6 979.45 357.6 V485.0 H977.55 V357.6 Q977.55 350.6 978.50 349.6 Z" fill="#111"/><path d="M982.82 388.5 Q984.23 389.5 984.23 400.5 V485.0 H981.41 V400.5 Q981.41 389.5 982.82 388.5 Z" fill="#111"/><path d="M987.14 349.4 Q988.09 350.4 988.09 357.4 V485.0 H986.19 V357.4 Q986.19 350.4 987.14 349.4 Z" fill="#111"/><path d="M991.43 391.1 Q992.84 392.1 992.84 403.1 V485.0 H990.03 V403.1 Q990.03 392.1 991.43 391.1 Z" fill="#111"/><path d="M995.73 349.2 Q996.68 350.2 996.68 357.2 V485.0 H994.78 V357.2 Q994.78 350.2 995.73 349.2 Z" fill="#111"/><path d="M999.99 388.8 Q1001.38 389.8 1001.38 400.8 V485.0 H998.60 V400.8 Q998.60 389.8 999.99 388.8 Z" fill="#111"/><path d="M1004.25 348.9 Q1005.20 349.9 1005.20 356.9 V485.0 H1003.30 V356.9 Q1003.30 349.9 1004.25 348.9 Z" fill="#111"/><path d="M1008.49 391.4 Q1009.88 392.4 1009.88 403.4 V485.0 H1007.11 V403.4 Q1007.11 392.4 1008.49 391.4 Z" fill="#111"/><path d="M1012.73 348.7 Q1013.68 349.7 1013.68 356.7 V485.0 H1011.78 V356.7 Q1011.78 349.7 1012.73 348.7 Z" fill="#111"/><path d="M1016.93 389.1 Q1018.31 390.1 1018.31 401.1 V485.0 H1015.56 V401.1 Q1015.56 390.1 1016.93 389.1 Z" fill="#111"/><path d="M1021.14 348.5 Q1022.09 349.5 1022.09 356.5 V485.0 H1020.19 V356.5 Q1020.19 349.5 1021.14 348.5 Z" fill="#111"/><path d="M1025.32 386.7 Q1026.69 387.7 1026.69 398.7 V485.0 H1023.95 V398.7 Q1023.95 387.7 1025.32 386.7 Z" fill="#111"/><path d="M1029.50 348.2 Q1030.45 349.2 1030.45 356.2 V485.0 H1028.55 V356.2 Q1028.55 349.2 1029.50 348.2 Z" fill="#111"/><path d="M1033.65 389.4 Q1035.01 390.4 1035.01 401.4 V485.0 H1032.29 V401.4 Q1032.29 390.4 1033.65 389.4 Z" fill="#111"/><path d="M1037.80 348.0 Q1038.75 349.0 1038.75 356.0 V485.0 H1036.85 V356.0 Q1036.85 349.0 1037.80 348.0 Z" fill="#111"/><path d="M1041.93 387.0 Q1043.28 388.0 1043.28 399.0 V485.0 H1040.58 V399.0 Q1040.58 388.0 1041.93 387.0 Z" fill="#111"/><path d="M1046.05 347.8 Q1047.00 348.8 1047.00 355.8 V485.0 H1045.10 V355.8 Q1045.10 348.8 1046.05 347.8 Z" fill="#111"/><path d="M1050.15 389.6 Q1051.49 390.6 1051.49 401.6 V485.0 H1048.81 V401.6 Q1048.81 390.6 1050.15 389.6 Z" fill="#111"/><path d="M1054.24 347.5 Q1055.19 348.5 1055.19 355.5 V485.0 H1053.29 V355.5 Q1053.29 348.5 1054.24 347.5 Z" fill="#111"/><path d="M1058.31 387.3 Q1059.64 388.3 1059.64 399.3 V485.0 H1056.98 V399.3 Q1056.98 388.3 1058.31 387.3 Z" fill="#111"/><path d="M1062.38 347.3 Q1063.33 348.3 1063.33 355.3 V485.0 H1061.43 V355.3 Q1061.43 348.3 1062.38 347.3 Z" fill="#111"/><path d="M1066.41 384.9 Q1067.74 385.9 1067.74 396.9 V485.0 H1065.09 V396.9 Q1065.09 385.9 1066.41 384.9 Z" fill="#111"/><path d="M1070.45 347.1 Q1071.40 348.1 1071.40 355.1 V485.0 H1069.50 V355.1 Q1069.50 348.1 1070.45 347.1 Z" fill="#111"/><path d="M1074.46 387.6 Q1075.78 388.6 1075.78 399.6 V485.0 H1073.15 V399.6 Q1073.15 388.6 1074.46 387.6 Z" fill="#111"/><path d="M1078.48 346.8 Q1079.43 347.8 1079.43 354.8 V485.0 H1077.53 V354.8 Q1077.53 347.8 1078.48 346.8 Z" fill="#111"/><path d="M1082.46 385.2 Q1083.76 386.2 1083.76 397.2 V485.0 H1081.15 V397.2 Q1081.15 386.2 1082.46 385.2 Z" fill="#111"/><path d="M1086.44 346.6 Q1087.39 347.6 1087.39 354.6 V485.0 H1085.49 V354.6 Q1085.49 347.6 1086.44 346.6 Z" fill="#111"/><path d="M1090.40 387.9 Q1091.69 388.9 1091.69 399.9 V485.0 H1089.10 V399.9 Q1089.10 388.9 1090.40 387.9 Z" fill="#111"/><path d="M1094.35 346.4 Q1095.30 347.4 1095.30 354.4 V485.0 H1093.40 V354.4 Q1093.40 347.4 1094.35 346.4 Z" fill="#111"/><path d="M1098.28 385.5 Q1099.56 386.5 1099.56 397.5 V485.0 H1096.99 V397.5 Q1096.99 386.5 1098.28 385.5 Z" fill="#111"/><path d="M1102.20 346.1 Q1103.15 347.1 1103.15 354.1 V485.0 H1101.25 V354.1 Q1101.25 347.1 1102.20 346.1 Z" fill="#111"/><path d="M1106.10 383.2 Q1107.38 384.2 1107.38 395.2 V485.0 H1104.82 V395.2 Q1104.82 384.2 1106.10 383.2 Z" fill="#111"/><path d="M1110.00 345.9 Q1110.95 346.9 1110.95 353.9 V485.0 H1109.05 V353.9 Q1109.05 346.9 1110.00 345.9 Z" fill="#111"/><path d="M1113.87 385.8 Q1115.14 386.8 1115.14 397.8 V485.0 H1112.60 V397.8 Q1112.60 386.8 1113.87 385.8 Z" fill="#111"/><path d="M1117.74 345.6 Q1118.69 346.6 1118.69 353.6 V485.0 H1116.79 V353.6 Q1116.79 346.6 1117.74 345.6 Z" fill="#111"/><path d="M1121.58 383.5 Q1122.84 384.5 1122.84 395.5 V485.0 H1120.32 V395.5 Q1120.32 384.5 1121.58 383.5 Z" fill="#111"/><path d="M1125.42 345.4 Q1126.37 346.4 1126.37 353.4 V485.0 H1124.47 V353.4 Q1124.47 346.4 1125.42 345.4 Z" fill="#111"/><path d="M1129.24 386.1 Q1130.49 387.1 1130.49 398.1 V485.0 H1127.98 V398.1 Q1127.98 387.1 1129.24 386.1 Z" fill="#111"/><path d="M1133.05 345.2 Q1134.00 346.2 1134.00 353.2 V485.0 H1132.10 V353.2 Q1132.10 346.2 1133.05 345.2 Z" fill="#111"/><path d="M1136.84 383.8 Q1138.08 384.8 1138.08 395.8 V485.0 H1135.59 V395.8 Q1135.59 384.8 1136.84 383.8 Z" fill="#111"/><path d="M1140.62 344.9 Q1141.57 345.9 1141.57 352.9 V485.0 H1139.67 V352.9 Q1139.67 345.9 1140.62 344.9 Z" fill="#111"/><path d="M1144.38 381.4 Q1145.62 382.4 1145.62 393.4 V485.0 H1143.15 V393.4 Q1143.15 382.4 1144.38 381.4 Z" fill="#111"/><path d="M1148.14 344.7 Q1149.09 345.7 1149.09 352.7 V485.0 H1147.19 V352.7 Q1147.19 345.7 1148.14 344.7 Z" fill="#111"/><path d="M1151.87 384.1 Q1153.09 385.1 1153.09 396.1 V485.0 H1150.64 V396.1 Q1150.64 385.1 1151.87 384.1 Z" fill="#111"/><path d="M1155.60 344.5 Q1156.55 345.5 1156.55 352.5 V485.0 H1154.65 V352.5 Q1154.65 345.5 1155.60 344.5 Z" fill="#111"/><path d="M1159.30 381.7 Q1160.52 382.7 1160.52 393.7 V485.0 H1158.08 V393.7 Q1158.08 382.7 1159.30 381.7 Z" fill="#111"/><path d="M1163.00 344.2 Q1163.95 345.2 1163.95 352.2 V485.0 H1162.05 V352.2 Q1162.05 345.2 1163.00 344.2 Z" fill="#111"/></g><rect x="442" y="496" width="359" height="86" fill="url(#bandUL)"/><rect x="800" y="485.5" width="368" height="96.5" fill="url(#bandUR)"/><rect x="427" y="582" width="748" height="56" fill="url(#bandM)"/><rect x="800" y="638" width="375" height="2.5" fill="#262626"/><path d="M427.0 485V641M430.8 485V641M434.6 485V641M438.3 485V641M442.1 485V641M445.9 485V641M449.7 485V641M453.5 485V641M457.2 485V641M461.0 485V641M464.8 485V641M468.6 485V641M472.4 485V641M476.1 485V641M479.9 485V641M483.7 485V641M487.5 485V641M491.3 485V641M495.0 485V641M498.8 485V641M502.6 485V641M506.4 485V641M510.2 485V641M513.9 485V641M517.7 485V641M521.5 485V641M525.3 485V641M529.1 485V641M532.8 485V641M536.6 485V641M540.4 485V641M544.2 485V641M548.0 485V641M551.7 485V641M555.5 485V641M559.3 485V641M563.1 485V641M566.9 485V641M570.6 485V641M574.4 485V641M578.2 485V641M582.0 485V641M585.8 485V641M589.5 485V641M593.3 485V641M597.1 485V641M600.9 485V641M604.7 485V641M608.4 485V641M612.2 485V641M616.0 485V641M619.8 485V641M623.6 485V641M627.3 485V641M631.1 485V641M634.9 485V641M638.7 485V641M642.5 485V641M646.2 485V641M650.0 485V641M653.8 485V641M657.6 485V641M661.4 485V641M665.1 485V641M668.9 485V641M672.7 485V641M676.5 485V641M680.3 485V641M684.0 485V641M687.8 485V641M691.6 485V641M695.4 485V641M699.2 485V641M702.9 485V641M706.7 485V641M710.5 485V641M714.3 485V641M718.1 485V641M721.8 485V641M725.6 485V641M729.4 485V641M733.2 485V641M737.0 485V641M740.7 485V641M744.5 485V641M748.3 485V641M752.1 485V641M755.9 485V641M759.6 485V641M763.4 485V641M767.2 485V641M771.0 485V641M774.8 485V641M778.5 485V641M782.3 485V641M786.1 485V641M789.9 485V641M793.7 485V641M797.4 485V641M801.2 485V641M805.0 485V641M808.8 485V641M812.6 485V641M816.3 485V641M820.1 485V641M823.9 485V641M827.7 485V641M831.5 485V641M835.2 485V641M839.0 485V641M842.8 485V641M846.6 485V641M850.4 485V641M854.1 485V641M857.9 485V641M861.7 485V641M865.5 485V641M869.3 485V641M873.0 485V641M876.8 485V641M880.6 485V641M884.4 485V641M888.2 485V641M891.9 485V641M895.7 485V641M899.5 485V641M903.3 485V641M907.1 485V641M910.8 485V641M914.6 485V641M918.4 485V641M922.2 485V641M926.0 485V641M929.7 485V641M933.5 485V641M937.3 485V641M941.1 485V641M944.9 485V641M948.6 485V641M952.4 485V641M956.2 485V641M960.0 485V641M963.8 485V641M967.5 485V641M971.3 485V641M975.1 485V641M978.9 485V641M982.7 485V641M986.4 485V641M990.2 485V641M994.0 485V641M997.8 485V641M1001.6 485V641M1005.3 485V641M1009.1 485V641M1012.9 485V641M1016.7 485V641M1020.5 485V641M1024.2 485V641M1028.0 485V641M1031.8 485V641M1035.6 485V641M1039.4 485V641M1043.1 485V641M1046.9 485V641M1050.7 485V641M1054.5 485V641M1058.3 485V641M1062.0 485V641M1065.8 485V641M1069.6 485V641M1073.4 485V641M1077.2 485V641M1080.9 485V641M1084.7 485V641M1088.5 485V641M1092.3 485V641M1096.1 485V641M1099.8 485V641M1103.6 485V641M1107.4 485V641M1111.2 485V641M1115.0 485V641M1118.7 485V641M1122.5 485V641M1126.3 485V641M1130.1 485V641M1133.9 485V641M1137.6 485V641M1141.4 485V641M1145.2 485V641M1149.0 485V641M1152.8 485V641M1156.5 485V641M1160.3 485V641M1164.1 485V641M1167.9 485V641M1171.7 485V641" stroke="#fff" stroke-width="0.9" opacity="0.07"/><rect x="429" y="638" width="260" height="140" fill="url(#combL)"/><rect x="889" y="640.5" width="281" height="138" fill="url(#combL)"/><rect x="688" y="638" width="113" height="117" fill="url(#texl)"/><rect x="688" y="638" width="113" height="117" fill="#141414" filter="url(#tx)" opacity="0.65"/><rect x="688" y="638" width="113" height="117" fill="#d0d0d0" filter="url(#txh)" opacity="0.3"/><rect x="801" y="640.5" width="88" height="117" fill="url(#texl)"/><rect x="801" y="640.5" width="88" height="117" fill="#141414" filter="url(#tx2)" opacity="0.65"/><rect x="801" y="640.5" width="88" height="117" fill="#d0d0d0" filter="url(#txh)" opacity="0.3"/><rect x="688" y="754" width="113" height="22" fill="#c4c4c4"/><rect x="801" y="757" width="88" height="21" fill="#c8c8c8"/><g filter="url(#bl)"><path d="M430.5 638V733Q430.5 750 445.8 762.0" stroke="#111" stroke-width="2.0" fill="none"/><path d="M434.32 746.0 Q435.57 745.0 435.57 736.0 V638.0 H433.07 V736.0 Q433.07 745.0 434.32 746.0 Z" fill="#111"/><path d="M438.1 638V733Q438.1 750 451.7 762.9" stroke="#111" stroke-width="2.0" fill="none"/><path d="M441.96 746.2 Q443.21 745.2 443.21 736.2 V638.0 H440.71 V736.2 Q440.71 745.2 441.96 746.2 Z" fill="#111"/><path d="M445.8 638V733Q445.8 750 457.7 763.8" stroke="#111" stroke-width="2.0" fill="none"/><path d="M449.60 746.4 Q450.85 745.4 450.85 736.4 V638.0 H448.35 V736.4 Q448.35 745.4 449.60 746.4 Z" fill="#111"/><path d="M453.4 638V733Q453.4 750 463.6 764.7" stroke="#111" stroke-width="2.0" fill="none"/><path d="M457.24 746.6 Q458.49 745.6 458.49 736.6 V638.0 H455.99 V736.6 Q455.99 745.6 457.24 746.6 Z" fill="#111"/><path d="M461.1 638V733Q461.1 750 469.6 765.6" stroke="#111" stroke-width="2.0" fill="none"/><path d="M464.88 746.8 Q466.13 745.8 466.13 736.8 V638.0 H463.63 V736.8 Q463.63 745.8 464.88 746.8 Z" fill="#111"/><path d="M468.7 638V733Q468.7 750 475.5 766.5" stroke="#111" stroke-width="2.0" fill="none"/><path d="M472.52 747.0 Q473.77 746.0 473.77 737.0 V638.0 H471.27 V737.0 Q471.27 746.0 472.52 747.0 Z" fill="#111"/><path d="M476.3 638V733Q476.3 750 481.4 767.4" stroke="#111" stroke-width="2.0" fill="none"/><path d="M480.16 747.2 Q481.41 746.2 481.41 737.2 V638.0 H478.91 V737.2 Q478.91 746.2 480.16 747.2 Z" fill="#111"/><path d="M484.0 638V733Q484.0 750 487.4 768.3" stroke="#111" stroke-width="2.0" fill="none"/><path d="M487.80 747.4 Q489.05 746.4 489.05 737.4 V638.0 H486.55 V737.4 Q486.55 746.4 487.80 747.4 Z" fill="#111"/><path d="M491.6 638V733Q491.6 750 493.3 769.2" stroke="#111" stroke-width="2.0" fill="none"/><path d="M495.44 747.6 Q496.69 746.6 496.69 737.6 V638.0 H494.19 V737.6 Q494.19 746.6 495.44 747.6 Z" fill="#111"/><path d="M499.3 638V733Q499.3 750 499.3 770.1" stroke="#111" stroke-width="2.0" fill="none"/><path d="M503.08 747.8 Q504.33 746.8 504.33 737.8 V638.0 H501.83 V737.8 Q501.83 746.8 503.08 747.8 Z" fill="#111"/><path d="M506.9 638V733Q506.9 750 506.9 771.0" stroke="#111" stroke-width="2.0" fill="none"/><path d="M510.72 748.0 Q511.97 747.0 511.97 738.0 V638.0 H509.47 V738.0 Q509.47 747.0 510.72 748.0 Z" fill="#111"/><path d="M514.5 638V733Q514.5 750 514.5 771.9" stroke="#111" stroke-width="2.0" fill="none"/><path d="M518.36 748.2 Q519.61 747.2 519.61 738.2 V638.0 H517.11 V738.2 Q517.11 747.2 518.36 748.2 Z" fill="#111"/><path d="M522.2 638V733Q522.2 750 522.2 772.8" stroke="#111" stroke-width="2.0" fill="none"/><path d="M526.00 748.4 Q527.25 747.4 527.25 738.4 V638.0 H524.75 V738.4 Q524.75 747.4 526.00 748.4 Z" fill="#111"/><path d="M529.8 638V733Q529.8 750 529.8 773.7" stroke="#111" stroke-width="2.0" fill="none"/><path d="M533.64 748.6 Q534.89 747.6 534.89 738.6 V638.0 H532.39 V738.6 Q532.39 747.6 533.64 748.6 Z" fill="#111"/><path d="M537.5 638V733Q537.5 750 537.5 774.6" stroke="#111" stroke-width="2.0" fill="none"/><path d="M541.28 748.8 Q542.53 747.8 542.53 738.8 V638.0 H540.03 V738.8 Q540.03 747.8 541.28 748.8 Z" fill="#111"/><path d="M545.1 638V733Q545.1 750 545.1 774.6" stroke="#111" stroke-width="2.0" fill="none"/><path d="M548.92 749.0 Q550.17 748.0 550.17 739.0 V638.0 H547.67 V739.0 Q547.67 748.0 548.92 749.0 Z" fill="#111"/><path d="M552.7 638V733Q552.7 750 552.7 774.6" stroke="#111" stroke-width="2.0" fill="none"/><path d="M556.56 749.2 Q557.81 748.2 557.81 739.2 V638.0 H555.31 V739.2 Q555.31 748.2 556.56 749.2 Z" fill="#111"/><path d="M560.4 638V733Q560.4 750 560.4 774.6" stroke="#111" stroke-width="2.0" fill="none"/><path d="M564.20 749.4 Q565.45 748.4 565.45 739.4 V638.0 H562.95 V739.4 Q562.95 748.4 564.20 749.4 Z" fill="#111"/><path d="M568.0 638V733Q568.0 750 568.0 774.6" stroke="#111" stroke-width="2.0" fill="none"/><path d="M571.84 749.6 Q573.09 748.6 573.09 739.6 V638.0 H570.59 V739.6 Q570.59 748.6 571.84 749.6 Z" fill="#111"/><path d="M575.7 638V733Q575.7 750 575.7 774.6" stroke="#111" stroke-width="2.0" fill="none"/><path d="M579.48 749.8 Q580.73 748.8 580.73 739.8 V638.0 H578.23 V739.8 Q578.23 748.8 579.48 749.8 Z" fill="#111"/><path d="M583.3 638V733Q583.3 750 583.3 774.6" stroke="#111" stroke-width="2.0" fill="none"/><path d="M587.12 750.0 Q588.37 749.0 588.37 740.0 V638.0 H585.87 V740.0 Q585.87 749.0 587.12 750.0 Z" fill="#111"/><path d="M590.9 638V733Q590.9 750 590.9 774.6" stroke="#111" stroke-width="2.0" fill="none"/><path d="M594.76 750.2 Q596.01 749.2 596.01 740.2 V638.0 H593.51 V740.2 Q593.51 749.2 594.76 750.2 Z" fill="#111"/><path d="M598.6 638V733Q598.6 750 598.6 774.6" stroke="#111" stroke-width="2.0" fill="none"/><path d="M602.40 750.4 Q603.65 749.4 603.65 740.4 V638.0 H601.15 V740.4 Q601.15 749.4 602.40 750.4 Z" fill="#111"/><path d="M606.2 638V733Q606.2 750 606.2 774.6" stroke="#111" stroke-width="2.0" fill="none"/><path d="M610.04 750.6 Q611.29 749.6 611.29 740.6 V638.0 H608.79 V740.6 Q608.79 749.6 610.04 750.6 Z" fill="#111"/><path d="M613.9 638V733Q613.9 750 613.9 774.6" stroke="#111" stroke-width="2.0" fill="none"/><path d="M617.68 750.8 Q618.93 749.8 618.93 740.8 V638.0 H616.43 V740.8 Q616.43 749.8 617.68 750.8 Z" fill="#111"/><path d="M621.5 638V733Q621.5 750 621.5 774.6" stroke="#111" stroke-width="2.0" fill="none"/><path d="M625.32 751.0 Q626.57 750.0 626.57 741.0 V638.0 H624.07 V741.0 Q624.07 750.0 625.32 751.0 Z" fill="#111"/><path d="M629.1 638V733Q629.1 750 629.1 774.6" stroke="#111" stroke-width="2.0" fill="none"/><path d="M632.96 751.2 Q634.21 750.2 634.21 741.2 V638.0 H631.71 V741.2 Q631.71 750.2 632.96 751.2 Z" fill="#111"/><path d="M636.8 638V733Q636.8 750 636.8 774.6" stroke="#111" stroke-width="2.0" fill="none"/><path d="M640.60 751.4 Q641.85 750.4 641.85 741.4 V638.0 H639.35 V741.4 Q639.35 750.4 640.60 751.4 Z" fill="#111"/><path d="M644.4 638V733Q644.4 750 644.4 774.6" stroke="#111" stroke-width="2.0" fill="none"/><path d="M648.24 751.6 Q649.49 750.6 649.49 741.6 V638.0 H646.99 V741.6 Q646.99 750.6 648.24 751.6 Z" fill="#111"/><path d="M652.1 638V733Q652.1 750 652.1 774.6" stroke="#111" stroke-width="2.0" fill="none"/><path d="M655.88 751.8 Q657.13 750.8 657.13 741.8 V638.0 H654.63 V741.8 Q654.63 750.8 655.88 751.8 Z" fill="#111"/><path d="M659.7 638V733Q659.7 750 659.7 774.6" stroke="#111" stroke-width="2.0" fill="none"/><path d="M663.52 752.0 Q664.77 751.0 664.77 742.0 V638.0 H662.27 V742.0 Q662.27 751.0 663.52 752.0 Z" fill="#111"/><path d="M667.3 638V733Q667.3 750 667.3 774.6" stroke="#111" stroke-width="2.0" fill="none"/><path d="M671.16 752.2 Q672.41 751.2 672.41 742.2 V638.0 H669.91 V742.2 Q669.91 751.2 671.16 752.2 Z" fill="#111"/><path d="M675.0 638V733Q675.0 750 675.0 774.6" stroke="#111" stroke-width="2.0" fill="none"/><path d="M678.80 752.4 Q680.05 751.4 680.05 742.4 V638.0 H677.55 V742.4 Q677.55 751.4 678.80 752.4 Z" fill="#111"/><path d="M682.6 638V733Q682.6 750 682.6 774.6" stroke="#111" stroke-width="2.0" fill="none"/><path d="M714 638V771" stroke="#1a1a1a" stroke-width="1.6"/><path d="M888.0 640V736Q888.0 752 888.0 777.0" stroke="#111" stroke-width="2.0" fill="none"/><path d="M892.99 752.0 Q894.59 751.0 894.59 742.0 V640.0 H891.39 V742.0 Q891.39 751.0 892.99 752.0 Z" fill="#111"/><path d="M898.0 640V736Q898.0 752 898.0 777.0" stroke="#111" stroke-width="2.0" fill="none"/><path d="M902.94 751.9 Q904.53 750.9 904.53 741.9 V640.0 H901.35 V741.9 Q901.35 750.9 902.94 751.9 Z" fill="#111"/><path d="M907.9 640V736Q907.9 752 907.9 777.0" stroke="#111" stroke-width="2.0" fill="none"/><path d="M912.79 751.7 Q914.37 750.7 914.37 741.7 V640.0 H911.21 V741.7 Q911.21 750.7 912.79 751.7 Z" fill="#111"/><path d="M917.7 640V736Q917.7 752 917.7 777.0" stroke="#111" stroke-width="2.0" fill="none"/><path d="M922.55 751.5 Q924.11 750.5 924.11 741.5 V640.0 H920.98 V741.5 Q920.98 750.5 922.55 751.5 Z" fill="#111"/><path d="M927.4 640V736Q927.4 752 927.4 777.0" stroke="#111" stroke-width="2.0" fill="none"/><path d="M932.22 751.4 Q933.77 750.4 933.77 741.4 V640.0 H930.66 V741.4 Q930.66 750.4 932.22 751.4 Z" fill="#111"/><path d="M937.0 640V736Q937.0 752 937.0 777.0" stroke="#111" stroke-width="2.0" fill="none"/><path d="M941.79 751.2 Q943.33 750.2 943.33 741.2 V640.0 H940.25 V741.2 Q940.25 750.2 941.79 751.2 Z" fill="#111"/><path d="M946.6 640V736Q946.6 752 946.6 777.0" stroke="#111" stroke-width="2.0" fill="none"/><path d="M951.27 751.1 Q952.80 750.1 952.80 741.1 V640.0 H949.75 V741.1 Q949.75 750.1 951.27 751.1 Z" fill="#111"/><path d="M956.0 640V736Q956.0 752 956.0 777.0" stroke="#111" stroke-width="2.0" fill="none"/><path d="M960.67 751.0 Q962.18 750.0 962.18 741.0 V640.0 H959.15 V741.0 Q959.15 750.0 960.67 751.0 Z" fill="#111"/><path d="M965.3 640V736Q965.3 752 965.3 777.0" stroke="#111" stroke-width="2.0" fill="none"/><path d="M969.96 750.8 Q971.47 749.8 971.47 740.8 V640.0 H968.46 V740.8 Q968.46 749.8 969.96 750.8 Z" fill="#111"/><path d="M974.6 640V736Q974.6 752 974.6 777.0" stroke="#111" stroke-width="2.0" fill="none"/><path d="M979.17 750.6 Q980.66 749.6 980.66 740.6 V640.0 H977.68 V740.6 Q977.68 749.6 979.17 750.6 Z" fill="#111"/><path d="M983.8 640V736Q983.8 752 983.8 777.0" stroke="#111" stroke-width="2.0" fill="none"/><path d="M988.28 750.5 Q989.77 749.5 989.77 740.5 V640.0 H986.80 V740.5 Q986.80 749.5 988.28 750.5 Z" fill="#111"/><path d="M992.8 640V736Q992.8 752 992.8 777.0" stroke="#111" stroke-width="2.0" fill="none"/><path d="M997.31 750.4 Q998.78 749.4 998.78 740.4 V640.0 H995.84 V740.4 Q995.84 749.4 997.31 750.4 Z" fill="#111"/><path d="M1001.8 640V736Q1001.8 752 1001.8 777.0" stroke="#111" stroke-width="2.0" fill="none"/><path d="M1006.24 750.2 Q1007.70 749.2 1007.70 740.2 V640.0 H1004.78 V740.2 Q1004.78 749.2 1006.24 750.2 Z" fill="#111"/><path d="M1010.7 640V736Q1010.7 752 1010.7 777.0" stroke="#111" stroke-width="2.0" fill="none"/><path d="M1015.07 750.0 Q1016.52 749.0 1016.52 740.0 V640.0 H1013.63 V740.0 Q1013.63 749.0 1015.07 750.0 Z" fill="#111"/><path d="M1019.5 640V736Q1019.5 752 1019.5 777.0" stroke="#111" stroke-width="2.0" fill="none"/><path d="M1023.82 749.9 Q1025.26 748.9 1025.26 739.9 V640.0 H1022.38 V739.9 Q1022.38 748.9 1023.82 749.9 Z" fill="#111"/><path d="M1028.2 640V736Q1028.2 752 1028.2 777.0" stroke="#111" stroke-width="2.0" fill="none"/><path d="M1032.47 749.8 Q1033.90 748.8 1033.90 739.8 V640.0 H1031.05 V739.8 Q1031.05 748.8 1032.47 749.8 Z" fill="#111"/><path d="M1036.8 640V736Q1036.8 752 1036.8 777.0" stroke="#111" stroke-width="2.0" fill="none"/><path d="M1041.03 749.6 Q1042.45 748.6 1042.45 739.6 V640.0 H1039.62 V739.6 Q1039.62 748.6 1041.03 749.6 Z" fill="#111"/><path d="M1045.3 640V736Q1045.3 752 1045.3 777.0" stroke="#111" stroke-width="2.0" fill="none"/><path d="M1049.50 749.5 Q1050.90 748.5 1050.90 739.5 V640.0 H1048.10 V739.5 Q1048.10 748.5 1049.50 749.5 Z" fill="#111"/><path d="M1053.7 640V736Q1053.7 752 1053.7 777.0" stroke="#111" stroke-width="2.0" fill="none"/><path d="M1057.88 749.3 Q1059.27 748.3 1059.27 739.3 V640.0 H1056.49 V739.3 Q1056.49 748.3 1057.88 749.3 Z" fill="#111"/><path d="M1062.0 640V736Q1062.0 752 1062.0 777.0" stroke="#111" stroke-width="2.0" fill="none"/><path d="M1066.17 749.1 Q1067.54 748.1 1067.54 739.1 V640.0 H1064.79 V739.1 Q1064.79 748.1 1066.17 749.1 Z" fill="#111"/><path d="M1070.3 640V736Q1070.3 752 1070.3 777.0" stroke="#111" stroke-width="2.0" fill="none"/><path d="M1074.36 749.0 Q1075.72 748.0 1075.72 739.0 V640.0 H1072.99 V739.0 Q1072.99 748.0 1074.36 749.0 Z" fill="#111"/><path d="M1078.4 640V736Q1078.4 752 1078.4 777.0" stroke="#111" stroke-width="2.0" fill="none"/><path d="M1082.46 748.9 Q1083.81 747.9 1083.81 738.9 V640.0 H1081.11 V738.9 Q1081.11 747.9 1082.46 748.9 Z" fill="#111"/><path d="M1086.5 640V736Q1086.5 752 1086.5 777.0" stroke="#111" stroke-width="2.0" fill="none"/><path d="M1090.47 748.7 Q1091.81 747.7 1091.81 738.7 V640.0 H1089.13 V738.7 Q1089.13 747.7 1090.47 748.7 Z" fill="#111"/><path d="M1094.4 640V736Q1094.4 752 1094.4 775.6" stroke="#111" stroke-width="2.0" fill="none"/><path d="M1098.38 748.5 Q1099.71 747.5 1099.71 738.5 V640.0 H1097.05 V738.5 Q1097.05 747.5 1098.38 748.5 Z" fill="#111"/><path d="M1102.3 640V736Q1102.3 752 1102.3 774.2" stroke="#111" stroke-width="2.0" fill="none"/><path d="M1106.21 748.4 Q1107.52 747.4 1107.52 738.4 V640.0 H1104.89 V738.4 Q1104.89 747.4 1106.21 748.4 Z" fill="#111"/><path d="M1110.1 640V736Q1110.1 752 1110.1 772.8" stroke="#111" stroke-width="2.0" fill="none"/><path d="M1113.94 748.2 Q1115.24 747.2 1115.24 738.2 V640.0 H1112.63 V738.2 Q1112.63 747.2 1113.94 748.2 Z" fill="#111"/><path d="M1117.8 640V736Q1117.8 752 1116.1 771.4" stroke="#111" stroke-width="2.0" fill="none"/><path d="M1121.58 748.1 Q1122.87 747.1 1122.87 738.1 V640.0 H1120.28 V738.1 Q1120.28 747.1 1121.58 748.1 Z" fill="#111"/><path d="M1125.4 640V736Q1125.4 752 1122.0 770.0" stroke="#111" stroke-width="2.0" fill="none"/><path d="M1129.13 748.0 Q1130.41 747.0 1130.41 738.0 V640.0 H1127.84 V738.0 Q1127.84 747.0 1129.13 748.0 Z" fill="#111"/><path d="M1132.9 640V736Q1132.9 752 1127.8 768.6" stroke="#111" stroke-width="2.0" fill="none"/><path d="M1136.58 747.8 Q1137.85 746.8 1137.85 737.8 V640.0 H1135.31 V737.8 Q1135.31 746.8 1136.58 747.8 Z" fill="#111"/><path d="M1140.3 640V736Q1140.3 752 1133.5 767.2" stroke="#111" stroke-width="2.0" fill="none"/><path d="M1143.94 747.6 Q1145.20 746.6 1145.20 737.6 V640.0 H1142.68 V737.6 Q1142.68 746.6 1143.94 747.6 Z" fill="#111"/><path d="M1147.6 640V736Q1147.6 752 1139.1 765.8" stroke="#111" stroke-width="2.0" fill="none"/><path d="M1151.21 747.5 Q1152.46 746.5 1152.46 737.5 V640.0 H1149.97 V737.5 Q1149.97 746.5 1151.21 747.5 Z" fill="#111"/><path d="M1154.8 640V736Q1154.8 752 1144.6 764.4" stroke="#111" stroke-width="2.0" fill="none"/><path d="M1158.39 747.4 Q1159.63 746.4 1159.63 737.4 V640.0 H1157.16 V737.4 Q1157.16 746.4 1158.39 747.4 Z" fill="#111"/><path d="M1162.0 640V736Q1162.0 752 1150.1 763.0" stroke="#111" stroke-width="2.0" fill="none"/><path d="M1165.48 747.2 Q1166.70 746.2 1166.70 737.2 V640.0 H1164.26 V737.2 Q1164.26 746.2 1165.48 747.2 Z" fill="#111"/><path d="M1169.0 640V736Q1169.0 752 1155.4 761.6" stroke="#111" stroke-width="2.0" fill="none"/></g><g font-family="Liberation Sans" font-size="4.2" font-weight="bold" fill="#1a1a80"><text x="451.5" y="359">2</text><text x="458.9" y="359">3</text><text x="466.4" y="359">4</text><text x="473.8" y="359">5</text><text x="481.4" y="359">6</text><text x="489.0" y="359">7</text><text x="496.6" y="359">8</text><text x="504.2" y="359">9</text><text x="511.9" y="359">10</text><text x="519.7" y="359">11</text><text x="527.4" y="359">12</text><text x="535.3" y="359">13</text><text x="543.1" y="359">14</text><text x="551.0" y="359">15</text><text x="559.0" y="359">16</text><text x="567.0" y="359">17</text><text x="575.0" y="359">18</text><text x="583.1" y="359">19</text><text x="591.2" y="359">20</text><text x="599.3" y="359">21</text><text x="607.5" y="359">22</text><text x="615.8" y="359">23</text><text x="624.0" y="359">24</text><text x="632.4" y="359">25</text><text x="640.7" y="359">26</text><text x="649.1" y="359">27</text><text x="657.6" y="359">28</text><text x="666.1" y="359">29</text><text x="674.6" y="359">30</text><text x="683.1" y="359">31</text><text x="691.8" y="359">32</text><text x="700.4" y="359">33</text><text x="709.1" y="359">34</text><text x="726.5" y="359">35</text><text x="887.5" y="349.0">34</text><text x="896.7" y="348.8">33</text><text x="905.9" y="348.5">32</text><text x="914.9" y="348.3">31</text><text x="924.0" y="348.1">30</text><text x="933.0" y="347.8">29</text><text x="941.9" y="347.6">28</text><text x="950.7" y="347.4">27</text><text x="959.6" y="347.1">26</text><text x="968.3" y="346.9">25</text><text x="977.0" y="346.6">24</text><text x="985.6" y="346.4">23</text><text x="994.2" y="346.2">22</text><text x="1002.8" y="345.9">21</text><text x="1011.2" y="345.7">20</text><text x="1019.6" y="345.5">19</text><text x="1028.0" y="345.2">18</text><text x="1036.3" y="345.0">17</text><text x="1044.6" y="344.8">16</text><text x="1052.7" y="344.5">15</text><text x="1060.9" y="344.3">14</text><text x="1069.0" y="344.1">13</text><text x="1077.0" y="343.8">12</text><text x="1084.9" y="343.6">11</text><text x="1092.8" y="343.4">10</text><text x="1100.7" y="343.1">9</text><text x="1108.5" y="342.9">8</text><text x="1116.2" y="342.6">7</text><text x="1123.9" y="342.4">6</text><text x="1131.6" y="342.2">5</text><text x="1139.1" y="341.9">4</text><text x="1146.6" y="341.7">3</text><text x="1154.1" y="341.5">2</text><text x="1161.5" y="341.2">1</text><text x="443.9" y="772.0">1</text><text x="449.9" y="772.8">2</text><text x="456.0" y="773.6">3</text><text x="462.0" y="774.4">4</text><text x="468.1" y="775.2">5</text><text x="474.1" y="776.0">6</text><text x="480.1" y="776.8">7</text><text x="486.2" y="777.6">8</text><text x="492.2" y="778.4">9</text><text x="498.3" y="779.2">10</text><text x="505.9" y="780.0">11</text><text x="513.5" y="780.8">12</text><text x="521.2" y="781.6">13</text><text x="528.8" y="782.4">14</text><text x="536.5" y="783.2">15</text><text x="544.1" y="783.2">16</text><text x="551.7" y="783.2">17</text><text x="559.4" y="783.2">18</text><text x="567.0" y="783.2">19</text><text x="574.7" y="783.2">20</text><text x="582.3" y="783.2">21</text><text x="589.9" y="783.2">22</text><text x="597.6" y="783.2">23</text><text x="605.2" y="783.2">24</text><text x="612.9" y="783.2">25</text><text x="620.5" y="783.2">26</text><text x="628.1" y="783.2">27</text><text x="635.8" y="783.2">28</text><text x="643.4" y="783.2">29</text><text x="651.1" y="783.2">30</text><text x="658.7" y="783.2">31</text><text x="666.3" y="783.2">32</text><text x="674.0" y="783.2">33</text><text x="681.6" y="783.2">34</text><text x="886.0" y="785.0">34</text><text x="896.0" y="785.0">33</text><text x="905.9" y="785.0">32</text><text x="915.7" y="785.0">31</text><text x="925.4" y="785.0">30</text><text x="935.0" y="785.0">29</text><text x="944.6" y="785.0">28</text><text x="954.0" y="785.0">27</text><text x="963.3" y="785.0">26</text><text x="972.6" y="785.0">25</text><text x="981.8" y="785.0">24</text><text x="990.8" y="785.0">23</text><text x="999.8" y="785.0">22</text><text x="1008.7" y="785.0">21</text><text x="1017.5" y="785.0">20</text><text x="1026.2" y="785.0">19</text><text x="1034.8" y="785.0">18</text><text x="1043.3" y="785.0">17</text><text x="1051.7" y="785.0">16</text><text x="1060.0" y="785.0">15</text><text x="1068.3" y="785.0">14</text><text x="1076.4" y="785.0">13</text><text x="1084.5" y="785.0">12</text><text x="1092.4" y="785.0">11</text><text x="1100.3" y="785.0">10</text><text x="1108.1" y="783.9">9</text><text x="1115.8" y="782.8">8</text><text x="1123.4" y="781.7">7</text><text x="1130.9" y="780.6">6</text><text x="1136.7" y="779.5">5</text><text x="1142.4" y="778.4">4</text><text x="1148.0" y="777.3">3</text><text x="1153.6" y="776.2">2</text><text x="1159.0" y="775.1">1</text></g><g font-family="Liberation Sans" font-size="4.2" font-weight="bold" fill="#f0a010"><text x="448.0" y="396.0">1</text><text x="455.4" y="394.0">2</text><text x="462.9" y="398.0">3</text><text x="470.3" y="395.0">4</text><text x="477.9" y="397.0">5</text><text x="485.5" y="396.0">6</text><text x="493.1" y="394.0">7</text><text x="500.7" y="398.0">8</text><text x="508.4" y="395.0">9</text><text x="516.2" y="397.0">10</text><text x="523.9" y="396.0">11</text><text x="531.8" y="394.0">12</text><text x="539.6" y="398.0">13</text><text x="547.5" y="395.0">14</text><text x="555.5" y="397.0">15</text><text x="563.5" y="396.0">16</text><text x="571.5" y="394.0">17</text><text x="579.6" y="398.0">18</text><text x="587.7" y="395.0">19</text><text x="595.8" y="397.0">20</text><text x="604.0" y="396.0">21</text><text x="612.3" y="394.0">22</text><text x="620.5" y="398.0">23</text><text x="628.9" y="395.0">24</text><text x="637.2" y="397.0">25</text><text x="645.6" y="396.0">26</text><text x="654.1" y="394.0">27</text><text x="662.6" y="398.0">28</text><text x="671.1" y="395.0">29</text><text x="679.6" y="397.0">30</text><text x="688.3" y="396.0">31</text><text x="696.9" y="394.0">32</text><text x="705.6" y="398.0">33</text><text x="723.0" y="395.0">34</text><text x="890.5" y="393.0">34</text><text x="899.7" y="392.6">33</text><text x="908.9" y="392.3">32</text><text x="917.9" y="391.9">31</text><text x="927.0" y="391.6">30</text><text x="936.0" y="391.2">29</text><text x="944.9" y="390.9">28</text><text x="953.7" y="390.5">27</text><text x="962.6" y="390.2">26</text><text x="971.3" y="389.8">25</text><text x="980.0" y="389.5">24</text><text x="988.6" y="389.1">23</text><text x="997.2" y="388.8">22</text><text x="1005.8" y="388.4">21</text><text x="1014.2" y="388.1">20</text><text x="1022.6" y="387.7">19</text><text x="1031.0" y="387.4">18</text><text x="1039.3" y="387.0">17</text><text x="1047.6" y="386.6">16</text><text x="1055.7" y="386.3">15</text><text x="1063.9" y="385.9">14</text><text x="1072.0" y="385.6">13</text><text x="1080.0" y="385.2">12</text><text x="1087.9" y="384.9">11</text><text x="1095.8" y="384.5">10</text><text x="1103.7" y="384.2">9</text><text x="1111.5" y="383.8">8</text><text x="1119.2" y="383.5">7</text><text x="1126.9" y="383.1">6</text><text x="1134.6" y="382.8">5</text><text x="1142.1" y="382.4">4</text><text x="1149.6" y="382.1">3</text><text x="1157.1" y="381.7">2</text><text x="1164.5" y="381.4">1</text><text x="429.0" y="746.0">1</text><text x="436.6" y="746.2">2</text><text x="444.3" y="746.4">3</text><text x="451.9" y="746.6">4</text><text x="459.6" y="746.8">5</text><text x="467.2" y="747.0">6</text><text x="474.8" y="747.2">7</text><text x="482.5" y="747.4">8</text><text x="490.1" y="747.6">9</text><text x="497.8" y="747.8">10</text><text x="505.4" y="748.0">11</text><text x="513.0" y="748.2">12</text><text x="520.7" y="748.4">13</text><text x="528.3" y="748.6">14</text><text x="536.0" y="748.8">15</text><text x="543.6" y="749.0">16</text><text x="551.2" y="749.2">17</text><text x="558.9" y="749.4">18</text><text x="566.5" y="749.6">19</text><text x="574.2" y="749.8">20</text><text x="581.8" y="750.0">21</text><text x="589.4" y="750.2">22</text><text x="597.1" y="750.4">23</text><text x="604.7" y="750.6">24</text><text x="612.4" y="750.8">25</text><text x="620.0" y="751.0">26</text><text x="627.6" y="751.2">27</text><text x="635.3" y="751.4">28</text><text x="642.9" y="751.6">29</text><text x="650.6" y="751.8">30</text><text x="658.2" y="752.0">31</text><text x="665.8" y="752.2">32</text><text x="673.5" y="752.4">33</text><text x="681.1" y="752.6">34</text><text x="889.0" y="753.0">34</text><text x="899.0" y="752.9">33</text><text x="908.9" y="752.7">32</text><text x="918.7" y="752.5">31</text><text x="928.4" y="752.4">30</text><text x="938.0" y="752.2">29</text><text x="947.6" y="752.1">28</text><text x="957.0" y="752.0">27</text><text x="966.3" y="751.8">26</text><text x="975.6" y="751.6">25</text><text x="984.8" y="751.5">24</text><text x="993.8" y="751.4">23</text><text x="1002.8" y="751.2">22</text><text x="1011.7" y="751.0">21</text><text x="1020.5" y="750.9">20</text><text x="1029.2" y="750.8">19</text><text x="1037.8" y="750.6">18</text><text x="1046.3" y="750.5">17</text><text x="1054.7" y="750.3">16</text><text x="1063.0" y="750.1">15</text><text x="1071.3" y="750.0">14</text><text x="1079.4" y="749.9">13</text><text x="1087.5" y="749.7">12</text><text x="1095.4" y="749.5">11</text><text x="1103.3" y="749.4">10</text><text x="1111.1" y="749.2">9</text><text x="1118.8" y="749.1">8</text><text x="1126.4" y="749.0">7</text><text x="1133.9" y="748.8">6</text><text x="1141.3" y="748.6">5</text><text x="1148.6" y="748.5">4</text><text x="1155.8" y="748.4">3</text><text x="1163.0" y="748.2">2</text><text x="1170.0" y="748.0">1</text></g><path d="M451.5 361.5h3M458.9 361.5h3M466.4 361.5h3M473.8 361.5h3M481.4 361.5h3M489.0 361.5h3M496.6 361.5h3M504.2 361.5h3M511.9 361.5h3M519.7 361.5h3M527.4 361.5h3M535.3 361.5h3M543.1 361.5h3M551.0 361.5h3M559.0 361.5h3M567.0 361.5h3M575.0 361.5h3M583.1 361.5h3M591.2 361.5h3M599.3 361.5h3M607.5 361.5h3M615.8 361.5h3M624.0 361.5h3M632.4 361.5h3M640.7 361.5h3M649.1 361.5h3M657.6 361.5h3M666.1 361.5h3M674.6 361.5h3M683.1 361.5h3M691.8 361.5h3M700.4 361.5h3M709.1 361.5h3M726.5 361.5h3M887.5 351.5h3M896.7 351.3h3M905.9 351.0h3M914.9 350.8h3M924.0 350.6h3M933.0 350.3h3M941.9 350.1h3M950.7 349.9h3M959.6 349.6h3M968.3 349.4h3M977.0 349.1h3M985.6 348.9h3M994.2 348.7h3M1002.8 348.4h3M1011.2 348.2h3M1019.6 348.0h3M1028.0 347.7h3M1036.3 347.5h3M1044.6 347.3h3M1052.7 347.0h3M1060.9 346.8h3M1069.0 346.6h3M1077.0 346.3h3M1084.9 346.1h3M1092.8 345.9h3M1100.7 345.6h3M1108.5 345.4h3M1116.2 345.1h3M1123.9 344.9h3M1131.6 344.7h3M1139.1 344.4h3M1146.6 344.2h3M1154.1 344.0h3M1161.5 343.7h3" stroke="#1a9a1a" stroke-width="1"/><path d="M388 576L395 582H388Z" fill="#9a9a9a"/><path d="M1214 576L1207 582H1214Z" fill="#9a9a9a"/><path d="M795 973L800 968L805 973Z" fill="#d0d0d0"/></svg>
<div class="a" style="left:1539px;top:117px;width:387px;height:108px;background:#fff;overflow:hidden"><svg width="387" height="108" viewBox="1539 117 387 108" style="position:absolute;left:0;top:0"><polygon points="1683,117 1707.5,117 1677,164 1652,164" fill="#dc2338"/><polygon points="1711,117 1739,117 1765,164 1737.5,164" fill="#9c9c9c"/><polygon points="1769,117 1794.5,117 1825,164 1797.5,164" fill="#9c9c9c"/><polygon points="1740,117 1766.5,117 1735.5,164 1708.5,164" fill="#dc2338"/><path d="M1620 166Q1741 105 1858 166Q1741 118 1620 166Z" fill="#1b8fd8" stroke="#1b8fd8" stroke-width="1"/><text x="1627.5" y="182.7" textLength="218" lengthAdjust="spacingAndGlyphs" font-family="Liberation Sans" font-weight="bold" font-size="19" fill="#1a1a1a">Seamark ZM</text><text transform="translate(1620 214) scale(1.75 1)" x="0" y="0" font-weight="bold" font-size="31" letter-spacing="2.6" fill="#111">卓茂科技</text></svg></div>
<div class="a" style="left:1540px;top:234px;width:97px;height:98px;border-radius:5px;border:1px solid #353535;background:linear-gradient(#4d4d4d,#3e3e3e)"></div>
<svg class="a" style="left:1540px;top:234px" width="97" height="98" viewBox="1540 234 97 98"><circle cx="1588.2" cy="283" r="39.5" fill="none" stroke="#0a0a0a" stroke-width="3.2"/><path d="M1580.3 261.4A23 23 0 1 0 1596.1 261.4" fill="none" stroke="#0a0a0a" stroke-width="3.4"/><path d="M1588.2 259V279" stroke="#0a0a0a" stroke-width="3.2"/></svg>
<div class="a" style="left:1644px;top:234px;width:274px;height:98px;background:#474747"></div>
<div class="a" style="left:1644px;top:234px;width:1px;height:98px;background:#262626"></div><div class="a" style="left:1735px;top:234px;width:1px;height:98px;background:#262626"></div><div class="a" style="left:1825px;top:234px;width:1px;height:98px;background:#262626"></div><div class="a" style="left:1917px;top:234px;width:1px;height:98px;background:#262626"></div><div class="a" style="left:1644px;top:234px;width:274px;height:1px;background:#262626"></div><div class="a" style="left:1644px;top:258px;width:274px;height:1px;background:#262626"></div><div class="a" style="left:1644px;top:282px;width:274px;height:1px;background:#262626"></div><div class="a" style="left:1644px;top:307px;width:274px;height:1px;background:#262626"></div><div class="a" style="left:1644px;top:331px;width:274px;height:1px;background:#262626"></div>
<div class="st" style="left:1649px;top:235px;font-size:12.5px;line-height:17px">光管1 Com1</div>
<div class="st" style="left:1739px;top:235px;font-size:12.5px;line-height:17px">待预热</div>
<div class="st" style="left:1830px;top:235px;font-size:12.5px;line-height:17px">0KV 0uA</div>
<div class="a" style="left:1540px;top:341px;width:379px;height:77px;background:#474747"></div>
<div class="a" style="left:1540px;top:341px;width:1px;height:77px;background:#262626"></div><div class="a" style="left:1634px;top:341px;width:1px;height:77px;background:#262626"></div><div class="a" style="left:1728px;top:341px;width:1px;height:77px;background:#262626"></div><div class="a" style="left:1823px;top:341px;width:1px;height:77px;background:#262626"></div><div class="a" style="left:1918px;top:341px;width:1px;height:77px;background:#262626"></div><div class="a" style="left:1540px;top:341px;width:379px;height:1px;background:#262626"></div><div class="a" style="left:1540px;top:380px;width:379px;height:1px;background:#262626"></div><div class="a" style="left:1540px;top:417px;width:379px;height:1px;background:#262626"></div>
<div class="st" style="left:1540px;top:352px;width:94px;text-align:center;font-size:12.5px;line-height:18px">总 数</div>
<div class="st" style="left:1634px;top:352px;width:94px;text-align:center;font-size:12.5px;line-height:18px">7551</div>
<div class="st" style="left:1728px;top:352px;width:95px;text-align:center;font-size:12.5px;line-height:18px">OK 数</div>
<div class="st" style="left:1823px;top:352px;width:95px;text-align:center;font-size:12.5px;line-height:18px">5656</div>
<div class="st" style="left:1540px;top:391px;width:94px;text-align:center;font-size:12.5px;line-height:18px">测试NG数</div>
<div class="st" style="left:1634px;top:391px;width:94px;text-align:center;font-size:12.5px;line-height:18px">1895</div>
<div class="st" style="left:1728px;top:391px;width:95px;text-align:center;font-size:12.5px;line-height:18px">扫码NG数</div>
<div class="st" style="left:1823px;top:391px;width:95px;text-align:center;font-size:12.5px;line-height:18px">0</div>
<div class="a" style="left:1537px;top:335px;width:1px;height:466px;background:#cfcfcf"></div>
<div class="a" style="left:1540px;top:451px;width:385px;height:454px;border:1px solid #2e2e2e;border-top:1px solid #3a3a3a"></div>
<div class="a" style="left:1540px;top:428px;width:43px;height:24px;background:#474747;border-top:2px solid #8a8a8a;border-left:1px solid #353535;border-right:1px solid #353535"></div>
<div class="a" style="left:1584px;top:430px;width:42px;height:21px;background:linear-gradient(#5a5a5a,#4e4e4e);border:1px solid #353535"></div>
<div class="a" style="left:1629px;top:430px;width:63px;height:21px;background:linear-gradient(#5a5a5a,#4e4e4e);border:1px solid #353535"></div>
<div class="st" style="left:1540px;top:434px;width:43px;text-align:center;font-size:12.5px;line-height:17px">信 号</div>
<div class="st" style="left:1584px;top:433px;width:42px;text-align:center;font-size:12.5px;line-height:17px">日 志</div>
<div class="st" style="left:1629px;top:433px;width:63px;text-align:center;font-size:12.5px;line-height:17px">电池数据</div>
<div class="a" style="left:1541px;top:454px;width:381px;height:448px;background:#464646"></div>
<div class="a" style="left:1541px;top:454px;width:1px;height:449px;background:#262626"></div><div class="a" style="left:1731px;top:454px;width:1px;height:449px;background:#262626"></div><div class="a" style="left:1920px;top:454px;width:1px;height:449px;background:#262626"></div><div class="a" style="left:1541px;top:454px;width:381px;height:2px;background:#262626"></div><div class="a" style="left:1541px;top:478px;width:381px;height:2px;background:#262626"></div><div class="a" style="left:1541px;top:502px;width:381px;height:2px;background:#262626"></div><div class="a" style="left:1541px;top:527px;width:381px;height:2px;background:#262626"></div><div class="a" style="left:1541px;top:551px;width:381px;height:2px;background:#262626"></div><div class="a" style="left:1541px;top:575px;width:381px;height:2px;background:#262626"></div><div class="a" style="left:1541px;top:599px;width:381px;height:2px;background:#262626"></div><div class="a" style="left:1541px;top:624px;width:381px;height:2px;background:#262626"></div><div class="a" style="left:1541px;top:648px;width:381px;height:2px;background:#262626"></div><div class="a" style="left:1541px;top:672px;width:381px;height:2px;background:#262626"></div><div class="a" style="left:1541px;top:697px;width:381px;height:2px;background:#262626"></div><div class="a" style="left:1541px;top:721px;width:381px;height:2px;background:#262626"></div><div class="a" style="left:1541px;top:745px;width:381px;height:2px;background:#262626"></div><div class="a" style="left:1541px;top:770px;width:381px;height:2px;background:#262626"></div><div class="a" style="left:1541px;top:795px;width:381px;height:2px;background:#262626"></div><div class="a" style="left:1541px;top:819px;width:381px;height:2px;background:#262626"></div><div class="a" style="left:1541px;top:843px;width:381px;height:2px;background:#262626"></div><div class="a" style="left:1541px;top:867px;width:381px;height:2px;background:#262626"></div><div class="a" style="left:1541px;top:901px;width:381px;height:2px;background:#262626"></div>
<div class="led off" style="left:1547px;top:459.5px"></div>
<div class="sig" style="left:1568px;top:455.0px;line-height:16px">扫码请求</div>
<div class="led off" style="left:1737px;top:459.5px"></div>
<div class="sig" style="left:1758px;top:455.0px;line-height:16px">拍照1请求</div>
<div class="led on" style="left:1547px;top:483.8px"></div>
<div class="sig" style="left:1568px;top:479.3px;line-height:16px">拍照2请求</div>
<div class="led off" style="left:1737px;top:483.8px"></div>
<div class="sig" style="left:1758px;top:479.3px;line-height:16px">初始化请求</div>
<div class="led on" style="left:1547px;top:508.1px"></div>
<div class="sig" style="left:1568px;top:503.6px;line-height:16px">测试模式</div>
<div class="led on" style="left:1737px;top:508.1px"></div>
<div class="sig" style="left:1758px;top:503.6px;line-height:16px">列数</div>
<div class="led on" style="left:1547px;top:532.4px"></div>
<div class="sig" style="left:1568px;top:527.9px;line-height:16px">行数</div>
<div class="led on" style="left:1547px;top:556.7px"></div>
<div class="sig" style="left:1568px;top:552.2px;line-height:16px">PC心跳</div>
<div class="led on" style="left:1737px;top:556.7px"></div>
<div class="sig" style="left:1758px;top:552.2px;line-height:16px">PC就绪</div>
<div class="led off" style="left:1547px;top:581.0px"></div>
<div class="sig" style="left:1568px;top:576.5px;line-height:16px">扫码完成</div>
<div class="led off" style="left:1737px;top:581.0px"></div>
<div class="sig" style="left:1758px;top:576.5px;line-height:16px">拍照1完成</div>
<div class="led on" style="left:1547px;top:605.3px"></div>
<div class="sig" style="left:1568px;top:600.8px;line-height:16px">拍照2完成</div>
<div class="led off" style="left:1737px;top:605.3px"></div>
<div class="sig" style="left:1758px;top:600.8px;line-height:16px">检测NG</div>
<div class="led on" style="left:1547px;top:629.6px"></div>
<div class="sig" style="left:1568px;top:625.1px;line-height:16px">检测OK</div>
<div class="led off" style="left:1737px;top:629.6px"></div>
<div class="sig" style="left:1758px;top:625.1px;line-height:16px">初始化完成</div>
<div class="led off" style="left:1547px;top:653.9px"></div>
<div class="sig" style="left:1568px;top:649.4px;line-height:16px">XRay开启</div>
<div class="a" style="left:1547px;top:915px;width:372px;height:21px;background:#007a00;color:#d8f0d8;font-size:12.5px;line-height:24px;text-align:center">自 动</div>
<div class="btn" style="left:1547px;top:974px;width:78px;height:40px;line-height:41px">启 动</div>
<div class="btn" style="left:1654px;top:974px;width:79px;height:40px;line-height:41px">停 止</div>
<div class="btn" style="left:1829px;top:974px;width:79px;height:40px;line-height:41px">计数清零</div>
<div class="st" style="left:1676px;top:1027px;line-height:18px">V1.0</div>
<div class="st" style="left:1720px;top:1027px;line-height:18px">当前账号:Admin</div>
<div class="a" style="left:1822px;top:1027px;width:78px;overflow:hidden;color:#dcdcdc;font-size:13px;line-height:18px;white-space:nowrap">已运行0天 3:52:10</div>
<div class="a" style="left:1900px;top:1015px;width:26px;height:32px;background:#2e2e2e"></div>
<svg class="a" style="left:1904px;top:1022px" width="16" height="16"><path d="M2 2L8 7.5L2 10.5Z" fill="#e83a6a"/><path d="M14 5.5V14L6 9Z" fill="#e83a6a"/><path d="M2 2L14 8" stroke="#c02a52" stroke-width="0.8"/></svg>
<div class="a" style="left:57px;top:1023px;width:268px;height:24px;background:#008000;color:#c8e8c8;font-size:12px;line-height:24px;white-space:nowrap;overflow:hidden">PLC在线 相机1在线&nbsp; 读码器1在线&nbsp; 算法初始化成功</div>
<div class="a" style="left:57px;top:1047px;width:1869px;height:39px;background:linear-gradient(90deg,#1f323c,#20333e 50%,#1d2f44)"></div>
<div class="a" style="left:298px;top:1047px;width:43px;height:39px;background:#3b4a52"></div>
<div class="a" style="left:159px;top:1083px;width:30px;height:3px;background:#76b9ec"></div>
<div class="a" style="left:190px;top:1083px;width:7px;height:3px;background:#76b9ec"></div>
<div class="a" style="left:298px;top:1083px;width:43px;height:3px;background:#76b9ec"></div>
<div class="a" style="left:349px;top:1083px;width:40px;height:3px;background:#76b9ec"></div>
<div class="a" style="left:397px;top:1083px;width:39px;height:3px;background:#76b9ec"></div>
<div class="a" style="left:445px;top:1083px;width:39px;height:3px;background:#76b9ec"></div>
<svg class="a" style="left:72px;top:1058px" width="17" height="17"><path d="M0 2.3L7 1.3V8H0Z M8 1.1L17 0V8H8Z M0 9H7V15.7L0 14.7Z M8 9H17V17L8 15.9Z" fill="#fff"/></svg><svg class="a" style="left:118px;top:1054px" width="26" height="26" viewBox="0 0 26 26"><defs><linearGradient id="e1" x1="0" y1="0" x2="1" y2="1"><stop offset="0" stop-color="#36c3f0"/><stop offset="1" stop-color="#1160c0"/></linearGradient></defs><circle cx="13" cy="13" r="12" fill="url(#e1)"/><path d="M24 14Q24 6 15 5Q7 5 6 12Q8 9 13 9Q19 10 19 15Q15 17 11 15Q13 21 20 20Q24 18 24 14Z" fill="#5ad26c"/><circle cx="12" cy="15" r="4" fill="#1a5aa8"/></svg><svg class="a" style="left:165px;top:1056px" width="25" height="22"><path d="M0 2H9L11 4H25V21H0Z" fill="#f2c040"/><rect x="0" y="6" width="25" height="15" fill="#ffd865"/><rect x="7" y="13" width="11" height="8" fill="#2f8fd8"/><rect x="10" y="16" width="5" height="5" fill="#ffd865"/></svg><svg class="a" style="left:213px;top:1054px" width="25" height="25"><path d="M8 7V4Q12.5 0 17 4V7" stroke="#3aa0e8" stroke-width="1.6" fill="none"/><rect x="1" y="6" width="23" height="18" rx="3" fill="#f4f4f4"/><rect x="8" y="10" width="4" height="4" fill="#f25022"/><rect x="13" y="10" width="4" height="4" fill="#7fba00"/><rect x="8" y="15" width="4" height="4" fill="#00a4ef"/><rect x="13" y="15" width="4" height="4" fill="#ffb900"/></svg><svg class="a" style="left:260px;top:1055px" width="25" height="22"><path d="M0 8L12.5 0L25 8V22H0Z" fill="#1e90e0"/><path d="M0 8L12.5 16L25 8" fill="#0a6cc0"/><path d="M0 9L12.5 17L25 9V22H0Z" fill="#2aa8f0"/></svg><svg class="a" style="left:309px;top:1054px" width="24" height="24"><rect width="24" height="24" fill="#fff"/><circle cx="12" cy="12" r="10" fill="#f8e830"/><circle cx="12" cy="12" r="7.5" fill="#222"/><path d="M12 12L19.5 12.0" stroke="#f8e830" stroke-width="1.2"/><path d="M12 12L18.9 14.9" stroke="#f8e830" stroke-width="1.2"/><path d="M12 12L17.3 17.3" stroke="#f8e830" stroke-width="1.2"/><path d="M12 12L14.9 18.9" stroke="#f8e830" stroke-width="1.2"/><path d="M12 12L12.0 19.5" stroke="#f8e830" stroke-width="1.2"/><path d="M12 12L9.1 18.9" stroke="#f8e830" stroke-width="1.2"/><path d="M12 12L6.7 17.3" stroke="#f8e830" stroke-width="1.2"/><path d="M12 12L5.1 14.9" stroke="#f8e830" stroke-width="1.2"/><path d="M12 12L4.5 12.0" stroke="#f8e830" stroke-width="1.2"/><path d="M12 12L5.1 9.1" stroke="#f8e830" stroke-width="1.2"/><path d="M12 12L6.7 6.7" stroke="#f8e830" stroke-width="1.2"/><path d="M12 12L9.1 5.1" stroke="#f8e830" stroke-width="1.2"/><path d="M12 12L12.0 4.5" stroke="#f8e830" stroke-width="1.2"/><path d="M12 12L14.9 5.1" stroke="#f8e830" stroke-width="1.2"/><path d="M12 12L17.3 6.7" stroke="#f8e830" stroke-width="1.2"/><path d="M12 12L18.9 9.1" stroke="#f8e830" stroke-width="1.2"/><circle cx="12" cy="12" r="2.5" fill="#f8e830"/></svg><svg class="a" style="left:356px;top:1054px" width="25" height="25"><rect width="25" height="25" fill="#7a3fd0"/><rect x="1.5" y="1.5" width="22" height="22" fill="#5a22b0"/><path d="M5 3V13H12V19H20M9 5V9H16V3M16 13V16H21" stroke="#e8d8ff" stroke-width="1.3" fill="none"/></svg><svg class="a" style="left:404px;top:1054px" width="24" height="24"><rect x="1" y="1" width="7" height="22" fill="#888"/><rect x="2" y="6" width="5" height="10" fill="#d03030"/><rect x="9" y="1" width="14" height="11" fill="#f0b020"/><rect x="9" y="12" width="14" height="11" fill="#60a0e0"/></svg><svg class="a" style="left:451px;top:1054px" width="26" height="25"><rect x="3" y="2" width="21" height="15" fill="#dfe6ea" stroke="#9aa" stroke-width="1"/><path d="M6 12L9 8L12 13L15 5L18 11L21 9" stroke="#3a8ad0" fill="none"/><path d="M10 20H18V23H10Z" fill="#ccd"/><rect x="0" y="6" width="5" height="14" fill="#c8d0d4"/></svg>
<div class="a" style="left:0;top:1086px;width:1984px;height:30px;background:linear-gradient(90deg,#1d2e38,#1e3040 50%,#1a2c48)"></div>
<svg class="a" style="left:10px;top:1092px" width="17" height="17"><path d="M0 2.3L7 1.3V8H0Z M8 1.1L17 0V8H8Z M0 9H7V15.7L0 14.7Z M8 9H17V17L8 15.9Z" fill="#fff"/></svg>
<div class="a" style="left:37px;top:1087px;width:267px;height:29px;background:linear-gradient(#dcdcdc,#f2f2f2 40%,#e6e6e6)"></div>
<svg class="a" style="left:49px;top:1091px" width="18" height="18"><circle cx="11" cy="7" r="5.5" fill="none" stroke="#222" stroke-width="1.4"/><path d="M7 11L1 17" stroke="#222" stroke-width="1.5"/></svg>
<div class="a" style="left:78px;top:1091px;font-size:14.5px;line-height:20px;color:#222">搜索</div>
<svg class="a" style="left:245px;top:1088px" width="60" height="28"><path d="M2 27Q30 18 58 27Z" fill="#4ab0d8"/><rect x="5" y="10" width="5" height="12" fill="#b09070"/><rect x="12" y="10" width="5" height="12" fill="#a08060"/><ellipse cx="12" cy="22" rx="11" ry="4" fill="#8ab0c8"/><rect x="26" y="2" width="2" height="22" fill="#aaa"/><circle cx="27" cy="9" r="2" fill="#999"/><rect x="36" y="10" width="6" height="14" fill="#5a9ab8"/><rect x="44" y="3" width="8" height="21" fill="#4a7a98"/><rect x="33" y="20" width="22" height="5" fill="#a8c8a8"/></svg>
<div class="a" style="left:498px;top:1087px;width:34px;height:29px;background:#37474f"></div>
<div class="a" style="left:532px;top:1087px;width:2px;height:29px;background:#15222a"></div>
<div class="a" style="left:0;top:1086px;width:1984px;height:1px;background:#4a5860"></div>
<svg class="a" style="left:316px;top:1091px" width="18" height="18" viewBox="0 0 18 18"><rect width="18" height="18" rx="3" fill="#3d7ef0"/><path d="M3 5Q8 7 10 9L15 4Q13 9 12 11Q11 15 8 15Q9 12 7 11Q5 9 3 5Z" fill="#fff"/></svg><svg class="a" style="left:354px;top:1091px" width="18" height="18" viewBox="0 0 18 18"><path d="M0 2H7L9 4H18V16H0Z" fill="#e8b030"/><rect x="0" y="5" width="18" height="11" fill="#f8d060"/><rect x="5" y="10" width="8" height="6" fill="#3a8ad8"/><rect x="7.5" y="12.5" width="3" height="3.5" fill="#f8d060"/></svg><svg class="a" style="left:393px;top:1091px" width="18" height="18" viewBox="0 0 18 18"><rect width="18" height="18" rx="3.5" fill="#1a7ef0"/><path d="M6 3Q14 6 12 12L8 15Q10 10 6 3Z" fill="#fff"/></svg><svg class="a" style="left:431px;top:1091px" width="18" height="18" viewBox="0 0 18 18"><circle cx="8" cy="8" r="6.5" fill="none" stroke="#1e88e5" stroke-width="1.6"/><path d="M4 13L2 17L7 14" fill="#1e88e5"/><path d="M13 9L16 12L13 16L10 12Z" fill="#f4b400"/><circle cx="13" cy="9" r="1.5" fill="#4caf50"/><circle cx="13" cy="16" r="1.5" fill="#e53935"/></svg><svg class="a" style="left:469px;top:1091px" width="18" height="18" viewBox="0 0 18 18"><rect width="18" height="18" rx="1" fill="#2fae3c"/><path d="M15 14L18 17V13Z" fill="#1a8a28"/><text x="1.5" y="13" font-family="Liberation Sans" font-size="10" font-weight="bold" fill="#e8ffe8">QC</text></svg><svg class="a" style="left:507px;top:1091px" width="18" height="18" viewBox="0 0 18 18"><rect width="18" height="18" rx="3.5" fill="#e8501e"/><path d="M3 4L9 9L3 14Z M15 4L9 9L15 14Z" fill="#fff"/></svg><svg class="a" style="left:546px;top:1091px" width="18" height="18" viewBox="0 0 18 18"><rect x="4" y="1" width="14" height="11" fill="#d8e0e4" stroke="#8a9aa0" stroke-width="0.8"/><path d="M6 8L9 4L12 9L15 5" stroke="#2a7ad0" fill="none"/><rect x="8" y="13" width="6" height="2" fill="#c0c8cc"/><rect x="0" y="4" width="3" height="13" fill="#c8d0d4"/><rect x="1" y="6" width="1" height="1.5" fill="#2ecc40"/></svg><svg class="a" style="left:584px;top:1091px" width="18" height="18" viewBox="0 0 18 18"><rect x="2" y="2" width="14" height="16" fill="#b8d8f0"/><path d="M2 2H16" stroke="#888" stroke-width="1.5" stroke-dasharray="1 1"/><path d="M4 7H14M4 10H14M4 13H14" stroke="#7aa8c8" stroke-width="0.8"/></svg><svg class="a" style="left:621px;top:1091px" width="18" height="18" viewBox="0 0 18 18"><rect x="1" y="2" width="12" height="15" fill="#f0f0f0" stroke="#888" stroke-width="0.6"/><rect x="2" y="9" width="10" height="7" fill="#48c030"/><path d="M9 14L16 3" stroke="#e8a020" stroke-width="2"/><circle cx="16" cy="2.5" r="1.2" fill="#c02020"/></svg><svg class="a" style="left:660px;top:1091px" width="18" height="18" viewBox="0 0 18 18"><path d="M1 3H5L7 12L9 6H11L13 12L15 3H18L14 16H11L9 10L7 16H4Z" fill="#e83820"/></svg><svg class="a" style="left:699px;top:1091px" width="18" height="18" viewBox="0 0 18 18"><path d="M2 5L9 1L15 6L9 12Z" fill="#b8c0c8"/><circle cx="9" cy="7" r="4" fill="none" stroke="#888" stroke-width="1.2"/><path d="M12 10L17 16" stroke="#a0a8b0" stroke-width="2"/><rect x="5" y="2" width="5" height="2" fill="#e88a20"/></svg><svg class="a" style="left:738px;top:1091px" width="18" height="18" viewBox="0 0 18 18"><ellipse cx="7" cy="7" rx="6.5" ry="5.5" fill="#3ac050"/><ellipse cx="12.5" cy="12" rx="5" ry="4.5" fill="#e8e8e8"/><circle cx="11" cy="11.5" r="0.8" fill="#888"/><circle cx="14" cy="11.5" r="0.8" fill="#888"/></svg><svg class="a" style="left:775px;top:1091px" width="18" height="18" viewBox="0 0 18 18"><rect x="0" y="2" width="18" height="14" fill="#e4e4e4" stroke="#888" stroke-width="0.6"/><rect x="3" y="5" width="4" height="9" fill="#1a6ad0"/><path d="M9 6H15M9 9H15M9 12H15" stroke="#555" stroke-width="1"/></svg><svg class="a" style="left:813px;top:1091px" width="18" height="18" viewBox="0 0 18 18"><rect width="18" height="18" fill="#7a3fd8"/><path d="M3 2V9H8V13H15M6 4V6H11V2M11 9V11H16M3 12V16H8" stroke="#e8d8ff" stroke-width="1.1" fill="none"/></svg><svg class="a" style="left:851px;top:1091px" width="18" height="18" viewBox="0 0 18 18"><rect x="0" y="2" width="18" height="14" fill="#d8d8d8" stroke="#888" stroke-width="0.6"/><rect x="2" y="4" width="10" height="10" fill="#4a9a6a"/><rect x="12" y="4" width="4" height="10" fill="#c8e0c8"/></svg><div class="a" style="left:311px;top:1114px;width:29px;height:2px;background:#76b9ec"></div><div class="a" style="left:349px;top:1114px;width:29px;height:2px;background:#76b9ec"></div><div class="a" style="left:388px;top:1114px;width:29px;height:2px;background:#76b9ec"></div><div class="a" style="left:426px;top:1114px;width:29px;height:2px;background:#76b9ec"></div><div class="a" style="left:464px;top:1114px;width:29px;height:2px;background:#76b9ec"></div><div class="a" style="left:502px;top:1114px;width:29px;height:2px;background:#76b9ec"></div><div class="a" style="left:540px;top:1114px;width:29px;height:2px;background:#76b9ec"></div><div class="a" style="left:578px;top:1114px;width:29px;height:2px;background:#76b9ec"></div><div class="a" style="left:616px;top:1114px;width:29px;height:2px;background:#76b9ec"></div><div class="a" style="left:654px;top:1114px;width:29px;height:2px;background:#76b9ec"></div><div class="a" style="left:694px;top:1114px;width:29px;height:2px;background:#76b9ec"></div><div class="a" style="left:732px;top:1114px;width:29px;height:2px;background:#76b9ec"></div><div class="a" style="left:770px;top:1114px;width:29px;height:2px;background:#76b9ec"></div><div class="a" style="left:808px;top:1114px;width:29px;height:2px;background:#76b9ec"></div><div class="a" style="left:846px;top:1114px;width:29px;height:2px;background:#76b9ec"></div>
<svg class="a" style="left:1765px;top:1094px" width="14" height="10"><path d="M1 8L7 2L13 8" stroke="#fff" stroke-width="1.4" fill="none"/></svg>
<svg class="a" style="left:1790px;top:1090px" width="18" height="20"><circle cx="9" cy="8" r="6" fill="#222"/><ellipse cx="9" cy="11" rx="4" ry="5" fill="#fff"/><path d="M4 13H14V16H4Z" fill="#e02020"/><circle cx="14" cy="15" r="4" fill="#f08030"/></svg>
<svg class="a" style="left:1814px;top:1093px" width="18" height="13"><rect x="4" y="4" width="13" height="8" fill="none" stroke="#fff" stroke-width="1.3"/><path d="M1 1V6M4 1V6" stroke="#fff"/></svg>
<svg class="a" style="left:1838px;top:1092px" width="18" height="15"><path d="M1 5H4L8 1V14L4 10H1Z" fill="none" stroke="#fff" stroke-width="1.2"/><path d="M11 5L16 10M16 5L11 10" stroke="#fff" stroke-width="1.2"/></svg>
<div class="a" style="left:1861px;top:1089px;font-size:16px;line-height:22px;color:#fff">英</div>
<div class="a" style="left:1889px;top:1090px;font-size:14px;line-height:20px;color:#fff">17:34</div>
<svg class="a" style="left:1941px;top:1091px" width="18" height="18"><path d="M1 1H17V13H9L4 17V13H1Z" fill="#fff"/><path d="M4 5H14M4 8H14M4 11H10" stroke="#1d2e40" stroke-width="1.2"/></svg>
<svg class="a" style="left:1658px;top:1061px" width="14" height="9"><path d="M1 8L7 2L13 8" stroke="#fff" stroke-width="1.3" fill="none"/></svg>
<svg class="a" style="left:1681px;top:1057px" width="18" height="18"><rect x="1" y="2" width="15" height="12" fill="none" stroke="#fff" stroke-width="1.2"/><path d="M5 6H10L8 4M10 10H5L7 12" stroke="#fff" fill="none"/><circle cx="14" cy="15" r="3" fill="#2a78d8"/></svg>
<svg class="a" style="left:1704px;top:1057px" width="18" height="17"><rect x="5" y="2" width="12" height="9" fill="none" stroke="#fff" stroke-width="1.2"/><path d="M1 5V14H10M11 11V15H7" stroke="#fff" stroke-width="1.2" fill="none"/></svg>
<svg class="a" style="left:1727px;top:1058px" width="18" height="16"><path d="M1 5H4L8 1V15L4 11H1Z" fill="none" stroke="#fff" stroke-width="1.2"/><path d="M11 5Q13 8 11 11M13 3Q16 8 13 13" stroke="#fff" stroke-width="1.1" fill="none"/></svg>
<div class="a" style="left:1751px;top:1055px;font-size:15px;line-height:22px;color:#fff">中</div>
<svg class="a" style="left:1777px;top:1056px" width="20" height="20"><rect x="1" y="1" width="18" height="18" rx="5" fill="#e8542a" transform="rotate(-8 10 10)"/><text x="5" y="16" font-family="Liberation Sans" font-weight="bold" font-size="15" fill="#fff">S</text></svg>
<div class="a" style="left:1810px;top:1048px;width:60px;text-align:center;font-size:12.5px;line-height:18.5px;color:#fff">17:34<br>2023/9/4</div>
<svg class="a" style="left:1884px;top:1057px" width="20" height="19"><path d="M1 1H19V14H11L7 18V14H1Z" fill="none" stroke="#fff" stroke-width="1.3"/></svg>
<div class="a" style="left:1922px;top:1047px;width:1px;height:39px;background:#7a8a9a"></div>
<div class="a" style="left:1979px;top:1087px;width:1px;height:29px;background:#6a7a8a"></div>
</body></html>
